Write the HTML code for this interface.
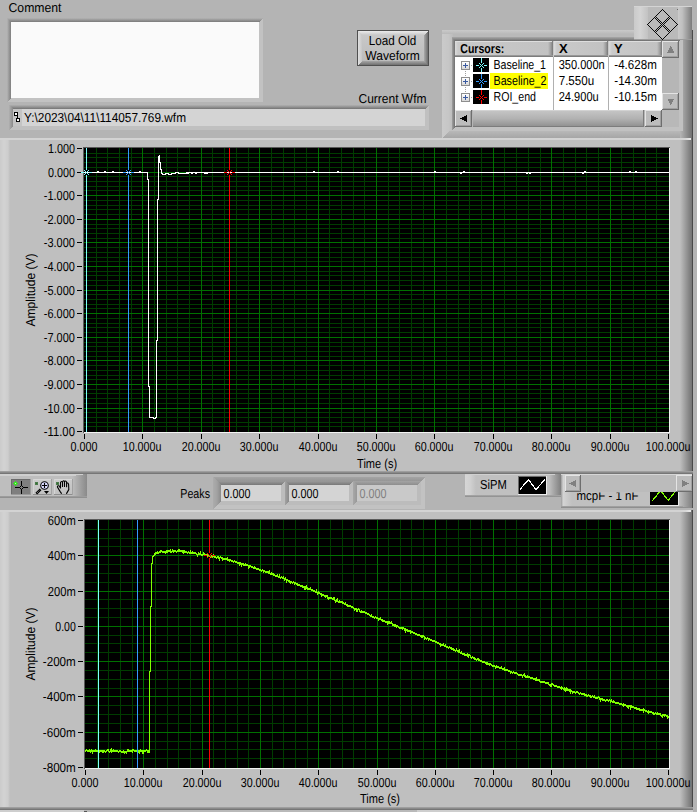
<!DOCTYPE html>
<html lang="en"><head><meta charset="utf-8"><title>Waveform viewer</title>
<style>
html,body{margin:0;padding:0;background:#b4b4b4;}
body{width:697px;height:812px;overflow:hidden;font-family:"Liberation Sans",sans-serif;}
svg{display:block;}
svg text{shape-rendering:auto;text-rendering:geometricPrecision;}
</style></head><body>
<svg width="697" height="812" viewBox="0 0 697 812" shape-rendering="crispEdges" font-family="'Liberation Sans', sans-serif" font-size="13"><defs><linearGradient id="g1" gradientUnits="userSpaceOnUse" x1="0" y1="18" x2="0" y2="22"><stop offset="0" stop-color="#b4b4b4"/><stop offset="1" stop-color="#7a7a7a"/></linearGradient><linearGradient id="g2" gradientUnits="userSpaceOnUse" x1="7" y1="0" x2="11" y2="0"><stop offset="0" stop-color="#b4b4b4"/><stop offset="1" stop-color="#7e7e7e"/></linearGradient><linearGradient id="g3" gradientUnits="userSpaceOnUse" x1="0" y1="105" x2="0" y2="109"><stop offset="0" stop-color="#b0b0b0"/><stop offset="1" stop-color="#747474"/></linearGradient><linearGradient id="g4" gradientUnits="userSpaceOnUse" x1="9" y1="0" x2="13" y2="0"><stop offset="0" stop-color="#b0b0b0"/><stop offset="1" stop-color="#8a8a8a"/></linearGradient><linearGradient id="g5" gradientUnits="userSpaceOnUse" x1="0" y1="31" x2="0" y2="35"><stop offset="0" stop-color="#ececec"/><stop offset="1" stop-color="#c8c8c8"/></linearGradient><linearGradient id="g6" gradientUnits="userSpaceOnUse" x1="0" y1="65" x2="0" y2="61"><stop offset="0" stop-color="#707070"/><stop offset="1" stop-color="#a6a6a6"/></linearGradient><linearGradient id="g7" gradientUnits="userSpaceOnUse" x1="358" y1="0" x2="362" y2="0"><stop offset="0" stop-color="#e0e0e0"/><stop offset="1" stop-color="#c6c6c6"/></linearGradient><linearGradient id="g8" gradientUnits="userSpaceOnUse" x1="428" y1="0" x2="424" y2="0"><stop offset="0" stop-color="#6c6c6c"/><stop offset="1" stop-color="#aaaaaa"/></linearGradient><linearGradient id="g9" gradientUnits="userSpaceOnUse" x1="0" y1="35" x2="0" y2="61"><stop offset="0" stop-color="#c8c8c8"/><stop offset="1" stop-color="#bcbcbc"/></linearGradient><linearGradient id="g10" gradientUnits="userSpaceOnUse" x1="442" y1="0" x2="453" y2="0"><stop offset="0" stop-color="#cacaca"/><stop offset="0.6" stop-color="#c6c6c6"/><stop offset="1" stop-color="#bcbcbc"/></linearGradient><linearGradient id="g11" gradientUnits="userSpaceOnUse" x1="0" y1="30" x2="0" y2="34"><stop offset="0" stop-color="#cacaca"/><stop offset="1" stop-color="#b9b9b9"/></linearGradient><linearGradient id="g12" gradientUnits="userSpaceOnUse" x1="0" y1="131" x2="0" y2="138"><stop offset="0" stop-color="#b8b8b8"/><stop offset="1" stop-color="#a6a6a6"/></linearGradient><linearGradient id="g13" gradientUnits="userSpaceOnUse" x1="680" y1="0" x2="693" y2="0"><stop offset="0" stop-color="#b6b6b6"/><stop offset="0.9" stop-color="#727272"/><stop offset="0.93" stop-color="#4a4a4a"/><stop offset="1" stop-color="#4a4a4a"/></linearGradient><linearGradient id="g14" gradientUnits="userSpaceOnUse" x1="0" y1="37" x2="0" y2="41"><stop offset="0" stop-color="#a8a8a8"/><stop offset="1" stop-color="#6e6e6e"/></linearGradient><linearGradient id="g15" gradientUnits="userSpaceOnUse" x1="452" y1="0" x2="455" y2="0"><stop offset="0" stop-color="#a0a0a0"/><stop offset="1" stop-color="#707070"/></linearGradient><linearGradient id="g16" gradientUnits="userSpaceOnUse" x1="455" y1="0" x2="553" y2="0"><stop offset="0" stop-color="#dcdcdc"/><stop offset="0.030612244897959183" stop-color="#cacaca"/><stop offset="0.9489795918367347" stop-color="#c2c2c2"/><stop offset="0.9795918367346939" stop-color="#9c9c9c"/><stop offset="1" stop-color="#767676"/></linearGradient><linearGradient id="g17" gradientUnits="userSpaceOnUse" x1="0" y1="55" x2="0" y2="57"><stop offset="0" stop-color="#a6a6a6"/><stop offset="1" stop-color="#6e6e6e"/></linearGradient><linearGradient id="g18" gradientUnits="userSpaceOnUse" x1="554" y1="0" x2="608" y2="0"><stop offset="0" stop-color="#dcdcdc"/><stop offset="0.05555555555555555" stop-color="#cacaca"/><stop offset="0.9074074074074074" stop-color="#c2c2c2"/><stop offset="0.962962962962963" stop-color="#9c9c9c"/><stop offset="1" stop-color="#767676"/></linearGradient><linearGradient id="g19" gradientUnits="userSpaceOnUse" x1="0" y1="55" x2="0" y2="57"><stop offset="0" stop-color="#a6a6a6"/><stop offset="1" stop-color="#6e6e6e"/></linearGradient><linearGradient id="g20" gradientUnits="userSpaceOnUse" x1="609" y1="0" x2="662" y2="0"><stop offset="0" stop-color="#dcdcdc"/><stop offset="0.05660377358490566" stop-color="#cacaca"/><stop offset="0.9056603773584906" stop-color="#c2c2c2"/><stop offset="0.9622641509433962" stop-color="#9c9c9c"/><stop offset="1" stop-color="#767676"/></linearGradient><linearGradient id="g21" gradientUnits="userSpaceOnUse" x1="0" y1="55" x2="0" y2="57"><stop offset="0" stop-color="#a6a6a6"/><stop offset="1" stop-color="#6e6e6e"/></linearGradient><linearGradient id="g22" gradientUnits="userSpaceOnUse" x1="0" y1="62" x2="0" y2="69"><stop offset="0" stop-color="#ffffff"/><stop offset="1" stop-color="#d8d8d8"/></linearGradient><linearGradient id="g23" gradientUnits="userSpaceOnUse" x1="0" y1="78" x2="0" y2="85"><stop offset="0" stop-color="#ffffff"/><stop offset="1" stop-color="#d8d8d8"/></linearGradient><linearGradient id="g24" gradientUnits="userSpaceOnUse" x1="0" y1="94" x2="0" y2="101"><stop offset="0" stop-color="#ffffff"/><stop offset="1" stop-color="#d8d8d8"/></linearGradient><linearGradient id="g25" gradientUnits="userSpaceOnUse" x1="0" y1="110" x2="0" y2="127"><stop offset="0" stop-color="#c6c6c6"/><stop offset="0.5" stop-color="#b2b2b2"/><stop offset="1" stop-color="#8e8e8e"/></linearGradient><linearGradient id="g26" gradientUnits="userSpaceOnUse" x1="634" y1="0" x2="648" y2="0"><stop offset="0" stop-color="#cacaca"/><stop offset="0.45" stop-color="#d4d4d4"/><stop offset="1" stop-color="#c2c2c2"/></linearGradient><linearGradient id="g27" gradientUnits="userSpaceOnUse" x1="678" y1="0" x2="692" y2="0"><stop offset="0" stop-color="#cacaca"/><stop offset="0.3" stop-color="#c0c0c0"/><stop offset="1" stop-color="#7c7c7c"/></linearGradient><linearGradient id="g28" gradientUnits="userSpaceOnUse" x1="0" y1="0" x2="10" y2="0"><stop offset="0" stop-color="#cbcbcb"/><stop offset="0.4" stop-color="#d3d3d3"/><stop offset="0.8" stop-color="#cdcdcd"/><stop offset="1" stop-color="#bfbfbf"/></linearGradient><linearGradient id="g29" gradientUnits="userSpaceOnUse" x1="680" y1="0" x2="693" y2="0"><stop offset="0" stop-color="#bfbfbf"/><stop offset="0.92" stop-color="#727272"/><stop offset="0.93" stop-color="#484848"/><stop offset="1" stop-color="#484848"/></linearGradient><linearGradient id="g30" gradientUnits="userSpaceOnUse" x1="680" y1="0" x2="691" y2="0"><stop offset="0" stop-color="#d3d3d3"/><stop offset="0.5" stop-color="#d6d6d6"/><stop offset="1" stop-color="#ececec"/></linearGradient><linearGradient id="g31" gradientUnits="userSpaceOnUse" x1="0" y1="471" x2="0" y2="474"><stop offset="0" stop-color="#a8a8a8"/><stop offset="1" stop-color="#6c6c6c"/></linearGradient><linearGradient id="g32" gradientUnits="userSpaceOnUse" x1="72" y1="0" x2="87" y2="0"><stop offset="0" stop-color="#bebebe"/><stop offset="1" stop-color="#8a8a8a"/></linearGradient><linearGradient id="g33" gradientUnits="userSpaceOnUse" x1="0" y1="496" x2="0" y2="498"><stop offset="0" stop-color="#a2a2a2"/><stop offset="1" stop-color="#8a8a8a"/></linearGradient><linearGradient id="g34" gradientUnits="userSpaceOnUse" x1="0" y1="479" x2="0" y2="495"><stop offset="0" stop-color="#cccccc"/><stop offset="1" stop-color="#c0c0c0"/></linearGradient><linearGradient id="g35" gradientUnits="userSpaceOnUse" x1="0" y1="479" x2="0" y2="495"><stop offset="0" stop-color="#cccccc"/><stop offset="1" stop-color="#c0c0c0"/></linearGradient><linearGradient id="g36" gradientUnits="userSpaceOnUse" x1="0" y1="477" x2="0" y2="481"><stop offset="0" stop-color="#a4a4a4"/><stop offset="1" stop-color="#969696"/></linearGradient><linearGradient id="g37" gradientUnits="userSpaceOnUse" x1="213" y1="0" x2="217" y2="0"><stop offset="0" stop-color="#acacac"/><stop offset="1" stop-color="#a2a2a2"/></linearGradient><linearGradient id="g38" gradientUnits="userSpaceOnUse" x1="0" y1="481" x2="0" y2="485"><stop offset="0" stop-color="#9a9a9a"/><stop offset="1" stop-color="#787878"/></linearGradient><linearGradient id="g39" gradientUnits="userSpaceOnUse" x1="217" y1="0" x2="221" y2="0"><stop offset="0" stop-color="#a2a2a2"/><stop offset="1" stop-color="#8a8a8a"/></linearGradient><linearGradient id="g40" gradientUnits="userSpaceOnUse" x1="0" y1="481" x2="0" y2="485"><stop offset="0" stop-color="#9a9a9a"/><stop offset="1" stop-color="#787878"/></linearGradient><linearGradient id="g41" gradientUnits="userSpaceOnUse" x1="285" y1="0" x2="289" y2="0"><stop offset="0" stop-color="#a2a2a2"/><stop offset="1" stop-color="#8a8a8a"/></linearGradient><linearGradient id="g42" gradientUnits="userSpaceOnUse" x1="0" y1="481" x2="0" y2="485"><stop offset="0" stop-color="#a4a4a4"/><stop offset="1" stop-color="#8e8e8e"/></linearGradient><linearGradient id="g43" gradientUnits="userSpaceOnUse" x1="353" y1="0" x2="357" y2="0"><stop offset="0" stop-color="#a8a8a8"/><stop offset="1" stop-color="#989898"/></linearGradient><linearGradient id="g44" gradientUnits="userSpaceOnUse" x1="465" y1="0" x2="476" y2="0"><stop offset="0" stop-color="#d6d6d6"/><stop offset="0.5" stop-color="#d0d0d0"/><stop offset="1" stop-color="#c0c0c0"/></linearGradient><linearGradient id="g45" gradientUnits="userSpaceOnUse" x1="549" y1="0" x2="561" y2="0"><stop offset="0" stop-color="#c0c0c0"/><stop offset="1" stop-color="#808080"/></linearGradient><linearGradient id="g46" gradientUnits="userSpaceOnUse" x1="0" y1="495" x2="0" y2="497"><stop offset="0" stop-color="#aaaaaa"/><stop offset="1" stop-color="#8c8c8c"/></linearGradient><linearGradient id="g47" gradientUnits="userSpaceOnUse" x1="561" y1="0" x2="572" y2="0"><stop offset="0" stop-color="#9a9a9a"/><stop offset="0.2" stop-color="#d4d4d4"/><stop offset="1" stop-color="#c0c0c0"/></linearGradient><linearGradient id="g48" gradientUnits="userSpaceOnUse" x1="0" y1="506" x2="0" y2="508"><stop offset="0" stop-color="#a8a8a8"/><stop offset="1" stop-color="#868686"/></linearGradient><linearGradient id="g49" gradientUnits="userSpaceOnUse" x1="679" y1="0" x2="693" y2="0"><stop offset="0" stop-color="#c0c0c0"/><stop offset="1" stop-color="#7c7c7c"/></linearGradient><linearGradient id="g50" gradientUnits="userSpaceOnUse" x1="0" y1="0" x2="10" y2="0"><stop offset="0" stop-color="#cbcbcb"/><stop offset="0.4" stop-color="#d3d3d3"/><stop offset="0.8" stop-color="#cdcdcd"/><stop offset="1" stop-color="#bfbfbf"/></linearGradient><linearGradient id="g51" gradientUnits="userSpaceOnUse" x1="680" y1="0" x2="693" y2="0"><stop offset="0" stop-color="#bfbfbf"/><stop offset="0.92" stop-color="#727272"/><stop offset="0.93" stop-color="#484848"/><stop offset="1" stop-color="#484848"/></linearGradient><linearGradient id="g52" gradientUnits="userSpaceOnUse" x1="680" y1="0" x2="691" y2="0"><stop offset="0" stop-color="#d3d3d3"/><stop offset="0.5" stop-color="#d6d6d6"/><stop offset="1" stop-color="#ececec"/></linearGradient><linearGradient id="g53" gradientUnits="userSpaceOnUse" x1="0" y1="807" x2="0" y2="810"><stop offset="0" stop-color="#a8a8a8"/><stop offset="1" stop-color="#6c6c6c"/></linearGradient></defs><rect x="0" y="0" width="697" height="812" fill="#b4b4b4" />
<text x="8.5" y="11.5" font-size="13" font-weight="normal" fill="#000" text-anchor="start" textLength="53" lengthAdjust="spacingAndGlyphs" >Comment</text>
<polygon points="7,18 263,18 259,22 11,22" fill="url(#g1)" />
<polygon points="7,102 263,102 259,98 11,98" fill="#c2c2c2" />
<polygon points="7,18 11,22 11,98 7,102" fill="url(#g2)" />
<polygon points="263,18 259,22 259,98 263,102" fill="#c2c2c2" />
<rect x="11" y="22" width="248" height="76" fill="#fafafa" />
<polygon points="9,105 429,105 425,109 13,109" fill="url(#g3)" />
<polygon points="9,130 429,130 425,126 13,126" fill="#c0c0c0" />
<polygon points="9,105 13,109 13,126 9,130" fill="url(#g4)" />
<polygon points="429,105 425,109 425,126 429,130" fill="#c0c0c0" />
<rect x="13" y="109" width="412" height="17" fill="#d4d4d4" />
<rect x="13" y="109" width="9" height="17" fill="#c4c4c4" />
<rect x="14" y="112" width="4" height="4" fill="#000" />
<rect x="15" y="113" width="2" height="2" fill="#fff" />
<rect x="17" y="116" width="1" height="2" fill="#000" />
<rect x="16" y="118" width="4" height="4" fill="#000" />
<rect x="17" y="119" width="2" height="2" fill="#fff" />
<text x="24" y="121.5" font-size="13" font-weight="normal" fill="#000" text-anchor="start" textLength="162" lengthAdjust="spacingAndGlyphs" >Y:\2023\04\11\114057.769.wfm</text>
<text x="358.5" y="102.5" font-size="13" font-weight="normal" fill="#000" text-anchor="start" textLength="68" lengthAdjust="spacingAndGlyphs" >Current Wfm</text>
<rect x="357" y="30" width="72" height="36" fill="#505050" />
<polygon points="358,31 428,31 424,35 362,35" fill="url(#g5)" />
<polygon points="358,65 428,65 424,61 362,61" fill="url(#g6)" />
<polygon points="358,31 362,35 362,61 358,65" fill="url(#g7)" />
<polygon points="428,31 424,35 424,61 428,65" fill="url(#g8)" />
<rect x="362" y="35" width="62" height="26" fill="url(#g9)" />
<text x="392.5" y="45" font-size="13" font-weight="normal" fill="#000" text-anchor="middle" textLength="47.5" lengthAdjust="spacingAndGlyphs" >Load Old</text>
<text x="392.5" y="60" font-size="13" font-weight="normal" fill="#000" text-anchor="middle" textLength="54.5" lengthAdjust="spacingAndGlyphs" >Waveform</text>
<rect x="442" y="30" width="251" height="108" fill="#b9b9b9" />
<rect x="442" y="30" width="11" height="108" fill="url(#g10)" />
<rect x="442" y="30" width="251" height="4" fill="url(#g11)" />
<polygon points="442,138 693,138 693,131 449,131" fill="url(#g12)" />
<rect x="680" y="30" width="13" height="108" fill="url(#g13)" />
<polygon points="452,37 683,37 679,41 455,41" fill="url(#g14)" />
<polygon points="452,131 683,131 679,127 455,127" fill="#c1c1c1" />
<polygon points="452,37 455,41 455,127 452,131" fill="url(#g15)" />
<polygon points="683,37 679,41 679,127 683,131" fill="#c1c1c1" />
<rect x="455" y="41" width="224" height="86" fill="#b8b8b8" />
<rect x="455" y="57" width="207" height="53" fill="#ffffff" />
<rect x="455" y="41" width="207" height="16" fill="#c8c8c8" />
<rect x="455" y="41" width="98" height="16" fill="url(#g16)" />
<rect x="455" y="41" width="97" height="1" fill="#dedede" />
<rect x="455" y="55" width="98" height="2" fill="url(#g17)" />
<rect x="554" y="41" width="54" height="16" fill="url(#g18)" />
<rect x="554" y="41" width="53" height="1" fill="#dedede" />
<rect x="554" y="55" width="54" height="2" fill="url(#g19)" />
<rect x="609" y="41" width="53" height="16" fill="url(#g20)" />
<rect x="609" y="41" width="52" height="1" fill="#dedede" />
<rect x="609" y="55" width="53" height="2" fill="url(#g21)" />
<rect x="553" y="57" width="1" height="53" fill="#b0b0b0" />
<rect x="608" y="57" width="1" height="53" fill="#b0b0b0" />
<text x="460.3" y="52.5" font-size="13" font-weight="bold" fill="#000" text-anchor="start" textLength="44" lengthAdjust="spacingAndGlyphs" >Cursors:</text>
<text x="559" y="52.5" font-size="13" font-weight="bold" fill="#000" text-anchor="start" >X</text>
<text x="614" y="52.5" font-size="13" font-weight="bold" fill="#000" text-anchor="start" >Y</text>
<rect x="461" y="61" width="9" height="9" fill="#8e8e8e" rx="1.5"/>
<rect x="462" y="62" width="7" height="7" fill="url(#g22)" />
<rect x="463" y="65" width="5" height="1" fill="#3a5aa0" />
<rect x="465" y="63" width="1" height="5" fill="#3a5aa0" />
<rect x="471" y="65" width="1" height="1" fill="#a0a0a0" />
<rect x="465" y="71" width="1" height="1" fill="#a0a0a0" />
<rect x="465" y="73" width="1" height="1" fill="#a0a0a0" />
<rect x="465" y="75" width="1" height="1" fill="#a0a0a0" />
<rect x="473" y="58" width="16" height="14" fill="#000000" />
<rect x="481" y="58" width="1" height="5" fill="#80ffff" />
<rect x="481" y="68" width="1" height="4" fill="#80ffff" />
<rect x="476" y="65" width="3" height="1" fill="#80ffff" />
<rect x="484" y="65" width="3" height="1" fill="#80ffff" />
<rect x="480" y="64" width="1" height="1" fill="#80ffff" />
<rect x="482" y="64" width="1" height="1" fill="#80ffff" />
<rect x="480" y="66" width="1" height="1" fill="#80ffff" />
<rect x="482" y="66" width="1" height="1" fill="#80ffff" />
<rect x="479" y="63" width="1" height="1" fill="#80ffff" />
<rect x="483" y="63" width="1" height="1" fill="#80ffff" />
<rect x="479" y="67" width="1" height="1" fill="#80ffff" />
<rect x="483" y="67" width="1" height="1" fill="#80ffff" />
<rect x="481" y="65" width="1" height="1" fill="#80ffff" />
<text x="493.5" y="68.7" font-size="13" font-weight="normal" fill="#000" text-anchor="start" textLength="52.5" lengthAdjust="spacingAndGlyphs" >Baseline_1</text>
<text x="558.7" y="68.7" font-size="13" font-weight="normal" fill="#000" text-anchor="start" textLength="46" lengthAdjust="spacingAndGlyphs" >350.000n</text>
<text x="614.3" y="68.7" font-size="13" font-weight="normal" fill="#000" text-anchor="start" textLength="42.5" lengthAdjust="spacingAndGlyphs" >-4.628m</text>
<rect x="490" y="73" width="58" height="16" fill="#ffff00" />
<rect x="461" y="77" width="9" height="9" fill="#8e8e8e" rx="1.5"/>
<rect x="462" y="78" width="7" height="7" fill="url(#g23)" />
<rect x="463" y="81" width="5" height="1" fill="#3a5aa0" />
<rect x="465" y="79" width="1" height="5" fill="#3a5aa0" />
<rect x="471" y="81" width="1" height="1" fill="#a0a0a0" />
<rect x="465" y="87" width="1" height="1" fill="#a0a0a0" />
<rect x="465" y="89" width="1" height="1" fill="#a0a0a0" />
<rect x="465" y="91" width="1" height="1" fill="#a0a0a0" />
<rect x="473" y="74" width="16" height="14" fill="#000000" />
<rect x="481" y="74" width="1" height="5" fill="#3399ff" />
<rect x="481" y="84" width="1" height="4" fill="#3399ff" />
<rect x="476" y="81" width="3" height="1" fill="#3399ff" />
<rect x="484" y="81" width="3" height="1" fill="#3399ff" />
<rect x="480" y="80" width="1" height="1" fill="#3399ff" />
<rect x="482" y="80" width="1" height="1" fill="#3399ff" />
<rect x="480" y="82" width="1" height="1" fill="#3399ff" />
<rect x="482" y="82" width="1" height="1" fill="#3399ff" />
<rect x="479" y="79" width="1" height="1" fill="#3399ff" />
<rect x="483" y="79" width="1" height="1" fill="#3399ff" />
<rect x="479" y="83" width="1" height="1" fill="#3399ff" />
<rect x="483" y="83" width="1" height="1" fill="#3399ff" />
<rect x="481" y="81" width="1" height="1" fill="#3399ff" />
<text x="493.5" y="84.7" font-size="13" font-weight="normal" fill="#000" text-anchor="start" textLength="53" lengthAdjust="spacingAndGlyphs" >Baseline_2</text>
<text x="558.7" y="84.7" font-size="13" font-weight="normal" fill="#000" text-anchor="start" textLength="35.5" lengthAdjust="spacingAndGlyphs" >7.550u</text>
<text x="614.3" y="84.7" font-size="13" font-weight="normal" fill="#000" text-anchor="start" textLength="42.5" lengthAdjust="spacingAndGlyphs" >-14.30m</text>
<rect x="461" y="93" width="9" height="9" fill="#8e8e8e" rx="1.5"/>
<rect x="462" y="94" width="7" height="7" fill="url(#g24)" />
<rect x="463" y="97" width="5" height="1" fill="#3a5aa0" />
<rect x="465" y="95" width="1" height="5" fill="#3a5aa0" />
<rect x="471" y="97" width="1" height="1" fill="#a0a0a0" />
<rect x="473" y="90" width="16" height="14" fill="#000000" />
<rect x="481" y="90" width="1" height="5" fill="#ff0000" />
<rect x="481" y="100" width="1" height="4" fill="#ff0000" />
<rect x="476" y="97" width="3" height="1" fill="#ff0000" />
<rect x="484" y="97" width="3" height="1" fill="#ff0000" />
<rect x="480" y="96" width="1" height="1" fill="#ff0000" />
<rect x="482" y="96" width="1" height="1" fill="#ff0000" />
<rect x="480" y="98" width="1" height="1" fill="#ff0000" />
<rect x="482" y="98" width="1" height="1" fill="#ff0000" />
<rect x="479" y="95" width="1" height="1" fill="#ff0000" />
<rect x="483" y="95" width="1" height="1" fill="#ff0000" />
<rect x="479" y="99" width="1" height="1" fill="#ff0000" />
<rect x="483" y="99" width="1" height="1" fill="#ff0000" />
<rect x="481" y="97" width="1" height="1" fill="#ff0000" />
<text x="493.5" y="100.7" font-size="13" font-weight="normal" fill="#000" text-anchor="start" textLength="42.5" lengthAdjust="spacingAndGlyphs" >ROI_end</text>
<text x="558.7" y="100.7" font-size="13" font-weight="normal" fill="#000" text-anchor="start" textLength="40" lengthAdjust="spacingAndGlyphs" >24.900u</text>
<text x="614.3" y="100.7" font-size="13" font-weight="normal" fill="#000" text-anchor="start" textLength="42.5" lengthAdjust="spacingAndGlyphs" >-10.15m</text>
<rect x="662" y="41" width="17" height="69" fill="#b6b6b6" />
<rect x="662" y="41" width="17" height="17" fill="#bcbcbc" />
<rect x="662" y="41" width="17" height="1" fill="#e4e4e4" />
<rect x="662" y="41" width="1" height="17" fill="#e4e4e4" />
<rect x="662" y="57" width="17" height="1" fill="#6e6e6e" />
<rect x="678" y="41" width="1" height="17" fill="#6e6e6e" />
<rect x="663" y="56" width="15" height="1" fill="#a0a0a0" />
<rect x="677" y="42" width="1" height="15" fill="#a0a0a0" />
<polygon points="670.5,45.5 674.0,52.5 667.0,52.5" fill="#808080" />
<rect x="662" y="93" width="17" height="17" fill="#bcbcbc" />
<rect x="662" y="93" width="17" height="1" fill="#e4e4e4" />
<rect x="662" y="93" width="1" height="17" fill="#e4e4e4" />
<rect x="662" y="109" width="17" height="1" fill="#6e6e6e" />
<rect x="678" y="93" width="1" height="17" fill="#6e6e6e" />
<rect x="663" y="108" width="15" height="1" fill="#a0a0a0" />
<rect x="677" y="94" width="1" height="15" fill="#a0a0a0" />
<polygon points="670.5,105.5 674.0,98.5 667.0,98.5" fill="#808080" />
<rect x="455" y="110" width="207" height="17" fill="#b6b6b6" />
<rect x="455" y="110" width="17" height="17" fill="#bcbcbc" />
<rect x="455" y="110" width="17" height="1" fill="#e4e4e4" />
<rect x="455" y="110" width="1" height="17" fill="#e4e4e4" />
<rect x="455" y="126" width="17" height="1" fill="#6e6e6e" />
<rect x="471" y="110" width="1" height="17" fill="#6e6e6e" />
<rect x="456" y="125" width="15" height="1" fill="#a0a0a0" />
<rect x="470" y="111" width="1" height="15" fill="#a0a0a0" />
<polygon points="459.5,118.5 466.5,115.0 466.5,122.0" fill="#000" />
<rect x="645" y="110" width="17" height="17" fill="#bcbcbc" />
<rect x="645" y="110" width="17" height="1" fill="#e4e4e4" />
<rect x="645" y="110" width="1" height="17" fill="#e4e4e4" />
<rect x="645" y="126" width="17" height="1" fill="#6e6e6e" />
<rect x="661" y="110" width="1" height="17" fill="#6e6e6e" />
<rect x="646" y="125" width="15" height="1" fill="#a0a0a0" />
<rect x="660" y="111" width="1" height="15" fill="#a0a0a0" />
<polygon points="657.5,118.5 650.5,115.0 650.5,122.0" fill="#000" />
<rect x="473" y="110" width="171" height="17" fill="url(#g25)" />
<rect x="473" y="110" width="171" height="1" fill="#d2d2d2" />
<rect x="643" y="110" width="1" height="17" fill="#7c7c7c" />
<rect x="473" y="126" width="171" height="1" fill="#7c7c7c" />
<rect x="634" y="6" width="58" height="34" fill="#bababa" />
<rect x="634" y="6" width="14" height="34" fill="url(#g26)" />
<rect x="678" y="6" width="14" height="34" fill="url(#g27)" />
<rect x="634" y="6" width="58" height="1" fill="#d4d4d4" />
<rect x="634" y="39" width="58" height="1" fill="#9c9c9c" />
<path d="M647,24h1v1h-1zM648,23h1v1h-1zM648,25h1v1h-1zM649,22h1v1h-1zM649,26h1v1h-1zM650,21h1v1h-1zM650,27h1v1h-1zM651,20h1v1h-1zM651,28h1v1h-1zM652,19h1v1h-1zM652,29h1v1h-1zM653,18h1v1h-1zM653,30h1v1h-1zM654,17h1v1h-1zM654,31h1v1h-1zM655,16h1v1h-1zM655,18h1v1h-1zM655,30h1v1h-1zM655,32h1v1h-1zM656,15h1v1h-1zM656,17h1v1h-1zM656,19h1v1h-1zM656,29h1v1h-1zM656,31h1v1h-1zM656,33h1v1h-1zM657,14h1v1h-1zM657,18h1v1h-1zM657,20h1v1h-1zM657,28h1v1h-1zM657,30h1v1h-1zM657,34h1v1h-1zM658,13h1v1h-1zM658,19h1v1h-1zM658,21h1v1h-1zM658,27h1v1h-1zM658,29h1v1h-1zM658,35h1v1h-1zM659,12h1v1h-1zM659,20h1v1h-1zM659,22h1v1h-1zM659,26h1v1h-1zM659,28h1v1h-1zM659,36h1v1h-1zM660,11h1v1h-1zM660,21h1v1h-1zM660,23h1v1h-1zM660,25h1v1h-1zM660,27h1v1h-1zM660,37h1v1h-1zM661,10h1v1h-1zM661,22h1v1h-1zM661,24h1v1h-1zM661,26h1v1h-1zM661,38h1v1h-1zM662,9h1v1h-1zM662,23h1v1h-1zM662,25h1v1h-1zM662,39h1v1h-1zM663,10h1v1h-1zM663,22h1v1h-1zM663,24h1v1h-1zM663,26h1v1h-1zM663,38h1v1h-1zM664,11h1v1h-1zM664,21h1v1h-1zM664,23h1v1h-1zM664,25h1v1h-1zM664,27h1v1h-1zM664,37h1v1h-1zM665,12h1v1h-1zM665,20h1v1h-1zM665,22h1v1h-1zM665,26h1v1h-1zM665,28h1v1h-1zM665,36h1v1h-1zM666,13h1v1h-1zM666,19h1v1h-1zM666,21h1v1h-1zM666,27h1v1h-1zM666,29h1v1h-1zM666,35h1v1h-1zM667,14h1v1h-1zM667,18h1v1h-1zM667,20h1v1h-1zM667,28h1v1h-1zM667,30h1v1h-1zM667,34h1v1h-1zM668,15h1v1h-1zM668,17h1v1h-1zM668,19h1v1h-1zM668,29h1v1h-1zM668,31h1v1h-1zM668,33h1v1h-1zM669,16h1v1h-1zM669,18h1v1h-1zM669,30h1v1h-1zM669,32h1v1h-1zM670,17h1v1h-1zM670,31h1v1h-1zM671,18h1v1h-1zM671,30h1v1h-1zM672,19h1v1h-1zM672,29h1v1h-1zM673,20h1v1h-1zM673,28h1v1h-1zM674,21h1v1h-1zM674,27h1v1h-1zM675,22h1v1h-1zM675,26h1v1h-1zM676,23h1v1h-1zM676,25h1v1h-1zM677,24h1v1h-1z" fill="#0a0a0a"/>
<rect x="677" y="9" width="1" height="1" fill="#6a6a6a" />
<rect x="0" y="138" width="693" height="336" fill="#bfbfbf" />
<rect x="0" y="138" width="10" height="336" fill="url(#g28)" />
<rect x="0" y="138" width="693" height="2" fill="#d3d3d3" />
<polygon points="680,140 693,138 693,474 680,474" fill="url(#g29)" />
<rect x="680" y="138" width="11" height="2" fill="url(#g30)" />
<rect x="0" y="471" width="693" height="3" fill="url(#g31)" />
<rect x="83" y="147" width="587" height="286" fill="#5a5a5a" />
<rect x="84" y="432" width="586" height="1" fill="#f2f2f2" />
<rect x="669" y="148" width="1" height="285" fill="#f2f2f2" />
<rect x="84" y="148" width="585" height="284" fill="#000" />
<rect x="96" y="148" width="1" height="284" fill="#003c00" />
<rect x="107" y="148" width="1" height="284" fill="#003c00" />
<rect x="119" y="148" width="1" height="284" fill="#003c00" />
<rect x="131" y="148" width="1" height="284" fill="#003c00" />
<rect x="154" y="148" width="1" height="284" fill="#003c00" />
<rect x="166" y="148" width="1" height="284" fill="#003c00" />
<rect x="177" y="148" width="1" height="284" fill="#003c00" />
<rect x="189" y="148" width="1" height="284" fill="#003c00" />
<rect x="212" y="148" width="1" height="284" fill="#003c00" />
<rect x="224" y="148" width="1" height="284" fill="#003c00" />
<rect x="236" y="148" width="1" height="284" fill="#003c00" />
<rect x="248" y="148" width="1" height="284" fill="#003c00" />
<rect x="271" y="148" width="1" height="284" fill="#003c00" />
<rect x="283" y="148" width="1" height="284" fill="#003c00" />
<rect x="294" y="148" width="1" height="284" fill="#003c00" />
<rect x="306" y="148" width="1" height="284" fill="#003c00" />
<rect x="329" y="148" width="1" height="284" fill="#003c00" />
<rect x="341" y="148" width="1" height="284" fill="#003c00" />
<rect x="353" y="148" width="1" height="284" fill="#003c00" />
<rect x="364" y="148" width="1" height="284" fill="#003c00" />
<rect x="388" y="148" width="1" height="284" fill="#003c00" />
<rect x="399" y="148" width="1" height="284" fill="#003c00" />
<rect x="411" y="148" width="1" height="284" fill="#003c00" />
<rect x="423" y="148" width="1" height="284" fill="#003c00" />
<rect x="446" y="148" width="1" height="284" fill="#003c00" />
<rect x="458" y="148" width="1" height="284" fill="#003c00" />
<rect x="469" y="148" width="1" height="284" fill="#003c00" />
<rect x="481" y="148" width="1" height="284" fill="#003c00" />
<rect x="504" y="148" width="1" height="284" fill="#003c00" />
<rect x="516" y="148" width="1" height="284" fill="#003c00" />
<rect x="528" y="148" width="1" height="284" fill="#003c00" />
<rect x="540" y="148" width="1" height="284" fill="#003c00" />
<rect x="563" y="148" width="1" height="284" fill="#003c00" />
<rect x="575" y="148" width="1" height="284" fill="#003c00" />
<rect x="586" y="148" width="1" height="284" fill="#003c00" />
<rect x="598" y="148" width="1" height="284" fill="#003c00" />
<rect x="621" y="148" width="1" height="284" fill="#003c00" />
<rect x="633" y="148" width="1" height="284" fill="#003c00" />
<rect x="645" y="148" width="1" height="284" fill="#003c00" />
<rect x="656" y="148" width="1" height="284" fill="#003c00" />
<rect x="84" y="153" width="585" height="1" fill="#003c00" />
<rect x="84" y="157" width="585" height="1" fill="#003c00" />
<rect x="84" y="162" width="585" height="1" fill="#003c00" />
<rect x="84" y="167" width="585" height="1" fill="#003c00" />
<rect x="84" y="176" width="585" height="1" fill="#003c00" />
<rect x="84" y="181" width="585" height="1" fill="#003c00" />
<rect x="84" y="186" width="585" height="1" fill="#003c00" />
<rect x="84" y="190" width="585" height="1" fill="#003c00" />
<rect x="84" y="200" width="585" height="1" fill="#003c00" />
<rect x="84" y="205" width="585" height="1" fill="#003c00" />
<rect x="84" y="209" width="585" height="1" fill="#003c00" />
<rect x="84" y="214" width="585" height="1" fill="#003c00" />
<rect x="84" y="224" width="585" height="1" fill="#003c00" />
<rect x="84" y="228" width="585" height="1" fill="#003c00" />
<rect x="84" y="233" width="585" height="1" fill="#003c00" />
<rect x="84" y="238" width="585" height="1" fill="#003c00" />
<rect x="84" y="247" width="585" height="1" fill="#003c00" />
<rect x="84" y="252" width="585" height="1" fill="#003c00" />
<rect x="84" y="257" width="585" height="1" fill="#003c00" />
<rect x="84" y="261" width="585" height="1" fill="#003c00" />
<rect x="84" y="271" width="585" height="1" fill="#003c00" />
<rect x="84" y="275" width="585" height="1" fill="#003c00" />
<rect x="84" y="280" width="585" height="1" fill="#003c00" />
<rect x="84" y="285" width="585" height="1" fill="#003c00" />
<rect x="84" y="294" width="585" height="1" fill="#003c00" />
<rect x="84" y="299" width="585" height="1" fill="#003c00" />
<rect x="84" y="304" width="585" height="1" fill="#003c00" />
<rect x="84" y="308" width="585" height="1" fill="#003c00" />
<rect x="84" y="318" width="585" height="1" fill="#003c00" />
<rect x="84" y="323" width="585" height="1" fill="#003c00" />
<rect x="84" y="327" width="585" height="1" fill="#003c00" />
<rect x="84" y="332" width="585" height="1" fill="#003c00" />
<rect x="84" y="342" width="585" height="1" fill="#003c00" />
<rect x="84" y="346" width="585" height="1" fill="#003c00" />
<rect x="84" y="351" width="585" height="1" fill="#003c00" />
<rect x="84" y="356" width="585" height="1" fill="#003c00" />
<rect x="84" y="365" width="585" height="1" fill="#003c00" />
<rect x="84" y="370" width="585" height="1" fill="#003c00" />
<rect x="84" y="375" width="585" height="1" fill="#003c00" />
<rect x="84" y="379" width="585" height="1" fill="#003c00" />
<rect x="84" y="389" width="585" height="1" fill="#003c00" />
<rect x="84" y="393" width="585" height="1" fill="#003c00" />
<rect x="84" y="398" width="585" height="1" fill="#003c00" />
<rect x="84" y="403" width="585" height="1" fill="#003c00" />
<rect x="84" y="412" width="585" height="1" fill="#003c00" />
<rect x="84" y="417" width="585" height="1" fill="#003c00" />
<rect x="84" y="422" width="585" height="1" fill="#003c00" />
<rect x="84" y="426" width="585" height="1" fill="#003c00" />
<rect x="142" y="148" width="1" height="284" fill="#007000" />
<rect x="201" y="148" width="1" height="284" fill="#007000" />
<rect x="259" y="148" width="1" height="284" fill="#007000" />
<rect x="318" y="148" width="1" height="284" fill="#007000" />
<rect x="376" y="148" width="1" height="284" fill="#007000" />
<rect x="434" y="148" width="1" height="284" fill="#007000" />
<rect x="493" y="148" width="1" height="284" fill="#007000" />
<rect x="551" y="148" width="1" height="284" fill="#007000" />
<rect x="610" y="148" width="1" height="284" fill="#007000" />
<rect x="84" y="172" width="585" height="1" fill="#007000" />
<rect x="84" y="195" width="585" height="1" fill="#007000" />
<rect x="84" y="219" width="585" height="1" fill="#007000" />
<rect x="84" y="242" width="585" height="1" fill="#007000" />
<rect x="84" y="266" width="585" height="1" fill="#007000" />
<rect x="84" y="290" width="585" height="1" fill="#007000" />
<rect x="84" y="313" width="585" height="1" fill="#007000" />
<rect x="84" y="337" width="585" height="1" fill="#007000" />
<rect x="84" y="360" width="585" height="1" fill="#007000" />
<rect x="84" y="384" width="585" height="1" fill="#007000" />
<rect x="84" y="408" width="585" height="1" fill="#007000" />
<rect x="77" y="148" width="5" height="1" fill="#000" />
<text x="74.9" y="152.5" font-size="13" font-weight="normal" fill="#000" text-anchor="end" textLength="27" lengthAdjust="spacingAndGlyphs" >1.000</text>
<rect x="77" y="172" width="5" height="1" fill="#000" />
<text x="74.9" y="176.5" font-size="13" font-weight="normal" fill="#000" text-anchor="end" textLength="27" lengthAdjust="spacingAndGlyphs" >0.000</text>
<rect x="77" y="195" width="5" height="1" fill="#000" />
<text x="74.9" y="199.5" font-size="13" font-weight="normal" fill="#000" text-anchor="end" textLength="31.1" lengthAdjust="spacingAndGlyphs" >-1.000</text>
<rect x="77" y="219" width="5" height="1" fill="#000" />
<text x="74.9" y="223.5" font-size="13" font-weight="normal" fill="#000" text-anchor="end" textLength="31.1" lengthAdjust="spacingAndGlyphs" >-2.000</text>
<rect x="77" y="242" width="5" height="1" fill="#000" />
<text x="74.9" y="246.5" font-size="13" font-weight="normal" fill="#000" text-anchor="end" textLength="31.1" lengthAdjust="spacingAndGlyphs" >-3.000</text>
<rect x="77" y="266" width="5" height="1" fill="#000" />
<text x="74.9" y="270.5" font-size="13" font-weight="normal" fill="#000" text-anchor="end" textLength="31.1" lengthAdjust="spacingAndGlyphs" >-4.000</text>
<rect x="77" y="290" width="5" height="1" fill="#000" />
<text x="74.9" y="294.5" font-size="13" font-weight="normal" fill="#000" text-anchor="end" textLength="31.1" lengthAdjust="spacingAndGlyphs" >-5.000</text>
<rect x="77" y="313" width="5" height="1" fill="#000" />
<text x="74.9" y="317.5" font-size="13" font-weight="normal" fill="#000" text-anchor="end" textLength="31.1" lengthAdjust="spacingAndGlyphs" >-6.000</text>
<rect x="77" y="337" width="5" height="1" fill="#000" />
<text x="74.9" y="341.5" font-size="13" font-weight="normal" fill="#000" text-anchor="end" textLength="31.1" lengthAdjust="spacingAndGlyphs" >-7.000</text>
<rect x="77" y="360" width="5" height="1" fill="#000" />
<text x="74.9" y="364.5" font-size="13" font-weight="normal" fill="#000" text-anchor="end" textLength="31.1" lengthAdjust="spacingAndGlyphs" >-8.000</text>
<rect x="77" y="384" width="5" height="1" fill="#000" />
<text x="74.9" y="388.5" font-size="13" font-weight="normal" fill="#000" text-anchor="end" textLength="31.1" lengthAdjust="spacingAndGlyphs" >-9.000</text>
<rect x="77" y="408" width="5" height="1" fill="#000" />
<text x="74.9" y="412.5" font-size="13" font-weight="normal" fill="#000" text-anchor="end" textLength="31.1" lengthAdjust="spacingAndGlyphs" >-10.00</text>
<rect x="77" y="431" width="5" height="1" fill="#000" />
<text x="74.9" y="435.5" font-size="13" font-weight="normal" fill="#000" text-anchor="end" textLength="31.1" lengthAdjust="spacingAndGlyphs" >-11.00</text>
<rect x="84" y="434" width="1" height="5" fill="#000" />
<text x="84.1" y="450.7" font-size="13" font-weight="normal" fill="#000" text-anchor="middle" textLength="27" lengthAdjust="spacingAndGlyphs" >0.000</text>
<rect x="142" y="434" width="1" height="5" fill="#000" />
<text x="142.1" y="450.7" font-size="13" font-weight="normal" fill="#000" text-anchor="middle" textLength="38.8" lengthAdjust="spacingAndGlyphs" >10.000u</text>
<rect x="201" y="434" width="1" height="5" fill="#000" />
<text x="201.1" y="450.7" font-size="13" font-weight="normal" fill="#000" text-anchor="middle" textLength="38.8" lengthAdjust="spacingAndGlyphs" >20.000u</text>
<rect x="259" y="434" width="1" height="5" fill="#000" />
<text x="259.1" y="450.7" font-size="13" font-weight="normal" fill="#000" text-anchor="middle" textLength="38.8" lengthAdjust="spacingAndGlyphs" >30.000u</text>
<rect x="318" y="434" width="1" height="5" fill="#000" />
<text x="318.1" y="450.7" font-size="13" font-weight="normal" fill="#000" text-anchor="middle" textLength="38.8" lengthAdjust="spacingAndGlyphs" >40.000u</text>
<rect x="376" y="434" width="1" height="5" fill="#000" />
<text x="376.1" y="450.7" font-size="13" font-weight="normal" fill="#000" text-anchor="middle" textLength="38.8" lengthAdjust="spacingAndGlyphs" >50.000u</text>
<rect x="434" y="434" width="1" height="5" fill="#000" />
<text x="434.1" y="450.7" font-size="13" font-weight="normal" fill="#000" text-anchor="middle" textLength="38.8" lengthAdjust="spacingAndGlyphs" >60.000u</text>
<rect x="493" y="434" width="1" height="5" fill="#000" />
<text x="493.1" y="450.7" font-size="13" font-weight="normal" fill="#000" text-anchor="middle" textLength="38.8" lengthAdjust="spacingAndGlyphs" >70.000u</text>
<rect x="551" y="434" width="1" height="5" fill="#000" />
<text x="551.1" y="450.7" font-size="13" font-weight="normal" fill="#000" text-anchor="middle" textLength="38.8" lengthAdjust="spacingAndGlyphs" >80.000u</text>
<rect x="610" y="434" width="1" height="5" fill="#000" />
<text x="610.1" y="450.7" font-size="13" font-weight="normal" fill="#000" text-anchor="middle" textLength="38.8" lengthAdjust="spacingAndGlyphs" >90.000u</text>
<rect x="668" y="434" width="1" height="5" fill="#000" />
<text x="668.1" y="450.7" font-size="13" font-weight="normal" fill="#000" text-anchor="middle" textLength="44.6" lengthAdjust="spacingAndGlyphs" >100.000u</text>
<text x="377.1" y="467.7" font-size="13" font-weight="normal" fill="#000" text-anchor="middle" textLength="40" lengthAdjust="spacingAndGlyphs" >Time (s)</text>
<text transform="translate(35.3,290) rotate(-90)" font-size="13" text-anchor="middle" textLength="73" lengthAdjust="spacingAndGlyphs">Amplitude (V)</text>
<path d="M84,172h1v1h-1zM85,172h1v1h-1zM86,172h1v1h-1zM87,172h1v1h-1zM88,172h1v1h-1zM89,172h1v1h-1zM90,172h1v1h-1zM91,172h1v1h-1zM92,172h1v1h-1zM93,172h1v1h-1zM94,172h1v1h-1zM95,172h1v1h-1zM96,172h1v1h-1zM97,171h1v2h-1zM98,171h1v2h-1zM99,172h1v1h-1zM100,172h1v1h-1zM101,172h1v1h-1zM102,172h1v1h-1zM103,172h1v1h-1zM104,171h1v2h-1zM105,171h1v2h-1zM106,172h1v1h-1zM107,172h1v1h-1zM108,172h1v1h-1zM109,172h1v1h-1zM110,172h1v1h-1zM111,172h1v1h-1zM112,171h1v2h-1zM113,171h1v2h-1zM114,172h1v1h-1zM115,172h1v1h-1zM116,172h1v1h-1zM117,172h1v1h-1zM118,172h1v1h-1zM119,172h1v1h-1zM120,172h1v1h-1zM121,172h1v1h-1zM122,172h1v1h-1zM123,172h1v1h-1zM124,172h1v1h-1zM125,172h1v1h-1zM126,172h1v1h-1zM127,172h1v1h-1zM128,172h1v1h-1zM129,172h1v1h-1zM130,172h1v1h-1zM131,172h1v1h-1zM132,172h1v1h-1zM133,172h1v1h-1zM134,172h1v1h-1zM135,172h1v1h-1zM136,172h1v1h-1zM137,172h1v1h-1zM138,172h1v1h-1zM139,171h1v2h-1zM140,171h1v2h-1zM141,172h1v1h-1zM142,172h1v1h-1zM143,172h1v1h-1zM144,172h1v1h-1zM145,172h1v1h-1zM146,172h1v1h-1zM147,172h1v1h-1zM147,172h1v8h-1zM148,179h1v2h-1zM148,180h1v207h-1zM149,386h1v1h-1zM149,386h1v32h-1zM150,417h1v1h-1zM151,417h1v1h-1zM152,417h1v1h-1zM153,417h1v2h-1zM154,418h1v1h-1zM155,417h1v2h-1zM156,417h1v1h-1zM156,340h1v78h-1zM157,340h1v1h-1zM157,199h1v142h-1zM158,199h1v1h-1zM158,156h1v44h-1zM159,155h1v2h-1zM159,155h1v8h-1zM160,162h1v1h-1zM160,162h1v8h-1zM161,169h1v2h-1zM161,170h1v4h-1zM162,173h1v2h-1zM163,174h1v1h-1zM164,174h1v1h-1zM165,173h1v2h-1zM166,173h1v1h-1zM167,173h1v1h-1zM168,173h1v2h-1zM169,174h1v1h-1zM170,174h1v1h-1zM171,173h1v2h-1zM172,173h1v1h-1zM173,173h1v1h-1zM174,173h1v1h-1zM175,172h1v2h-1zM176,172h1v1h-1zM177,172h1v1h-1zM178,172h1v2h-1zM179,173h1v1h-1zM180,173h1v1h-1zM181,173h1v1h-1zM182,173h1v1h-1zM183,173h1v1h-1zM184,173h1v1h-1zM185,173h1v1h-1zM186,172h1v2h-1zM187,172h1v2h-1zM188,172h1v2h-1zM189,172h1v1h-1zM190,172h1v1h-1zM191,172h1v2h-1zM192,172h1v2h-1zM193,172h1v1h-1zM194,172h1v1h-1zM195,172h1v2h-1zM196,172h1v2h-1zM197,172h1v1h-1zM198,172h1v1h-1zM199,172h1v1h-1zM200,172h1v1h-1zM201,172h1v1h-1zM202,172h1v1h-1zM203,172h1v1h-1zM204,172h1v2h-1zM205,172h1v2h-1zM206,172h1v2h-1zM207,172h1v2h-1zM208,172h1v1h-1zM209,172h1v1h-1zM210,172h1v1h-1zM211,172h1v1h-1zM212,172h1v1h-1zM213,172h1v1h-1zM214,172h1v1h-1zM215,172h1v1h-1zM216,172h1v1h-1zM217,172h1v1h-1zM218,172h1v1h-1zM219,172h1v1h-1zM220,172h1v1h-1zM221,172h1v1h-1zM222,172h1v1h-1zM223,172h1v1h-1zM224,172h1v1h-1zM225,172h1v1h-1zM226,172h1v1h-1zM227,172h1v1h-1zM228,172h1v1h-1zM229,172h1v1h-1zM230,172h1v1h-1zM231,172h1v1h-1zM232,172h1v1h-1zM233,172h1v1h-1zM234,172h1v1h-1zM235,172h1v1h-1zM236,172h1v1h-1zM237,172h1v1h-1zM238,172h1v1h-1zM239,172h1v1h-1zM240,172h1v1h-1zM241,172h1v1h-1zM242,172h1v1h-1zM243,172h1v1h-1zM244,172h1v1h-1zM245,172h1v1h-1zM246,172h1v1h-1zM247,172h1v1h-1zM248,172h1v1h-1zM249,172h1v1h-1zM250,172h1v1h-1zM251,172h1v1h-1zM252,172h1v1h-1zM253,172h1v1h-1zM254,172h1v1h-1zM255,172h1v1h-1zM256,172h1v1h-1zM257,172h1v1h-1zM258,172h1v1h-1zM259,172h1v1h-1zM260,172h1v1h-1zM261,172h1v1h-1zM262,172h1v1h-1zM263,172h1v1h-1zM264,172h1v1h-1zM265,172h1v1h-1zM266,172h1v1h-1zM267,172h1v1h-1zM268,172h1v1h-1zM269,172h1v1h-1zM270,172h1v1h-1zM271,172h1v1h-1zM272,172h1v1h-1zM273,172h1v1h-1zM274,172h1v1h-1zM275,172h1v1h-1zM276,172h1v1h-1zM277,172h1v1h-1zM278,172h1v1h-1zM279,172h1v1h-1zM280,172h1v1h-1zM281,172h1v1h-1zM282,172h1v1h-1zM283,172h1v1h-1zM284,172h1v1h-1zM285,172h1v1h-1zM286,172h1v1h-1zM287,172h1v1h-1zM288,172h1v1h-1zM289,172h1v1h-1zM290,172h1v1h-1zM291,172h1v1h-1zM292,172h1v1h-1zM293,172h1v1h-1zM294,172h1v1h-1zM295,172h1v1h-1zM296,172h1v1h-1zM297,172h1v1h-1zM298,172h1v1h-1zM299,172h1v1h-1zM300,172h1v1h-1zM301,172h1v1h-1zM302,172h1v1h-1zM303,172h1v1h-1zM304,172h1v1h-1zM305,172h1v1h-1zM306,172h1v1h-1zM307,172h1v1h-1zM308,172h1v1h-1zM309,172h1v1h-1zM310,172h1v1h-1zM311,172h1v1h-1zM312,172h1v1h-1zM313,171h1v2h-1zM314,171h1v2h-1zM315,172h1v1h-1zM316,172h1v1h-1zM317,172h1v1h-1zM318,172h1v1h-1zM319,172h1v1h-1zM320,172h1v1h-1zM321,172h1v1h-1zM322,172h1v1h-1zM323,172h1v1h-1zM324,172h1v1h-1zM325,172h1v1h-1zM326,172h1v1h-1zM327,172h1v1h-1zM328,172h1v1h-1zM329,172h1v1h-1zM330,172h1v1h-1zM331,172h1v1h-1zM332,172h1v1h-1zM333,172h1v1h-1zM334,172h1v1h-1zM335,172h1v1h-1zM336,172h1v1h-1zM337,171h1v2h-1zM338,171h1v2h-1zM339,172h1v1h-1zM340,172h1v1h-1zM341,172h1v1h-1zM342,172h1v1h-1zM343,172h1v1h-1zM344,172h1v1h-1zM345,172h1v1h-1zM346,172h1v1h-1zM347,172h1v1h-1zM348,172h1v1h-1zM349,172h1v1h-1zM350,172h1v1h-1zM351,172h1v1h-1zM352,172h1v1h-1zM353,172h1v1h-1zM354,172h1v1h-1zM355,172h1v1h-1zM356,172h1v1h-1zM357,172h1v1h-1zM358,172h1v1h-1zM359,172h1v1h-1zM360,172h1v1h-1zM361,172h1v1h-1zM362,172h1v1h-1zM363,172h1v1h-1zM364,172h1v1h-1zM365,172h1v1h-1zM366,172h1v1h-1zM367,172h1v1h-1zM368,172h1v1h-1zM369,172h1v1h-1zM370,172h1v1h-1zM371,172h1v1h-1zM372,172h1v1h-1zM373,172h1v1h-1zM374,172h1v1h-1zM375,172h1v1h-1zM376,172h1v1h-1zM377,172h1v1h-1zM378,172h1v1h-1zM379,172h1v1h-1zM380,172h1v1h-1zM381,172h1v1h-1zM382,172h1v1h-1zM383,172h1v1h-1zM384,172h1v1h-1zM385,172h1v1h-1zM386,172h1v1h-1zM387,172h1v1h-1zM388,172h1v1h-1zM389,172h1v1h-1zM390,172h1v1h-1zM391,172h1v1h-1zM392,172h1v1h-1zM393,172h1v1h-1zM394,172h1v1h-1zM395,172h1v1h-1zM396,172h1v1h-1zM397,172h1v1h-1zM398,172h1v1h-1zM399,172h1v1h-1zM400,172h1v1h-1zM401,172h1v1h-1zM402,172h1v1h-1zM403,172h1v1h-1zM404,172h1v1h-1zM405,172h1v1h-1zM406,172h1v1h-1zM407,172h1v1h-1zM408,172h1v1h-1zM409,172h1v1h-1zM410,172h1v1h-1zM411,172h1v1h-1zM412,172h1v1h-1zM413,172h1v1h-1zM414,172h1v1h-1zM415,172h1v1h-1zM416,172h1v1h-1zM417,172h1v1h-1zM418,172h1v1h-1zM419,172h1v1h-1zM420,172h1v1h-1zM421,172h1v1h-1zM422,172h1v1h-1zM423,172h1v1h-1zM424,172h1v1h-1zM425,172h1v1h-1zM426,172h1v1h-1zM427,172h1v1h-1zM428,172h1v1h-1zM429,172h1v1h-1zM430,172h1v1h-1zM431,172h1v1h-1zM432,172h1v1h-1zM433,172h1v1h-1zM434,171h1v2h-1zM435,171h1v2h-1zM436,172h1v1h-1zM437,172h1v1h-1zM438,172h1v1h-1zM439,172h1v1h-1zM440,172h1v1h-1zM441,172h1v1h-1zM442,172h1v1h-1zM443,172h1v1h-1zM444,172h1v1h-1zM445,172h1v1h-1zM446,172h1v1h-1zM447,172h1v1h-1zM448,172h1v1h-1zM449,172h1v1h-1zM450,172h1v1h-1zM451,172h1v1h-1zM452,172h1v1h-1zM453,172h1v1h-1zM454,172h1v1h-1zM455,172h1v1h-1zM456,172h1v1h-1zM457,172h1v1h-1zM458,172h1v1h-1zM459,172h1v1h-1zM460,172h1v2h-1zM461,172h1v2h-1zM462,172h1v1h-1zM463,171h1v2h-1zM464,171h1v2h-1zM465,172h1v1h-1zM466,172h1v1h-1zM467,172h1v1h-1zM468,172h1v1h-1zM469,172h1v1h-1zM470,172h1v1h-1zM471,172h1v1h-1zM472,172h1v1h-1zM473,172h1v1h-1zM474,172h1v1h-1zM475,172h1v1h-1zM476,172h1v1h-1zM477,172h1v1h-1zM478,172h1v1h-1zM479,172h1v1h-1zM480,172h1v1h-1zM481,172h1v1h-1zM482,172h1v1h-1zM483,172h1v1h-1zM484,172h1v1h-1zM485,172h1v1h-1zM486,172h1v1h-1zM487,172h1v1h-1zM488,172h1v1h-1zM489,172h1v1h-1zM490,172h1v1h-1zM491,172h1v1h-1zM492,172h1v1h-1zM493,172h1v1h-1zM494,172h1v1h-1zM495,172h1v1h-1zM496,172h1v1h-1zM497,172h1v1h-1zM498,172h1v1h-1zM499,172h1v1h-1zM500,172h1v1h-1zM501,172h1v1h-1zM502,172h1v1h-1zM503,172h1v1h-1zM504,172h1v1h-1zM505,172h1v1h-1zM506,172h1v1h-1zM507,172h1v1h-1zM508,172h1v1h-1zM509,172h1v1h-1zM510,172h1v1h-1zM511,172h1v1h-1zM512,172h1v1h-1zM513,172h1v1h-1zM514,172h1v1h-1zM515,172h1v1h-1zM516,172h1v1h-1zM517,172h1v1h-1zM518,172h1v1h-1zM519,172h1v1h-1zM520,172h1v1h-1zM521,172h1v1h-1zM522,172h1v1h-1zM523,172h1v1h-1zM524,172h1v1h-1zM525,172h1v1h-1zM526,172h1v2h-1zM527,172h1v2h-1zM528,172h1v1h-1zM529,172h1v2h-1zM530,172h1v2h-1zM531,172h1v1h-1zM532,172h1v1h-1zM533,172h1v1h-1zM534,172h1v1h-1zM535,172h1v1h-1zM536,172h1v1h-1zM537,172h1v1h-1zM538,172h1v1h-1zM539,172h1v1h-1zM540,172h1v1h-1zM541,172h1v1h-1zM542,172h1v1h-1zM543,172h1v1h-1zM544,172h1v1h-1zM545,172h1v1h-1zM546,172h1v1h-1zM547,172h1v1h-1zM548,172h1v1h-1zM549,172h1v1h-1zM550,172h1v1h-1zM551,172h1v1h-1zM552,172h1v1h-1zM553,172h1v1h-1zM554,172h1v1h-1zM555,172h1v1h-1zM556,172h1v1h-1zM557,172h1v1h-1zM558,172h1v1h-1zM559,172h1v1h-1zM560,172h1v1h-1zM561,172h1v1h-1zM562,172h1v1h-1zM563,172h1v1h-1zM564,172h1v1h-1zM565,172h1v1h-1zM566,172h1v1h-1zM567,172h1v1h-1zM568,172h1v1h-1zM569,172h1v1h-1zM570,172h1v1h-1zM571,172h1v1h-1zM572,172h1v1h-1zM573,172h1v1h-1zM574,172h1v1h-1zM575,172h1v1h-1zM576,172h1v1h-1zM577,172h1v1h-1zM578,172h1v1h-1zM579,172h1v1h-1zM580,172h1v1h-1zM581,172h1v1h-1zM582,172h1v2h-1zM583,172h1v2h-1zM584,171h1v2h-1zM585,171h1v2h-1zM586,172h1v1h-1zM587,172h1v1h-1zM588,172h1v1h-1zM589,172h1v1h-1zM590,172h1v1h-1zM591,172h1v1h-1zM592,172h1v1h-1zM593,172h1v1h-1zM594,172h1v1h-1zM595,172h1v1h-1zM596,172h1v1h-1zM597,172h1v1h-1zM598,172h1v1h-1zM599,172h1v1h-1zM600,172h1v1h-1zM601,172h1v1h-1zM602,172h1v1h-1zM603,172h1v1h-1zM604,172h1v1h-1zM605,172h1v1h-1zM606,172h1v1h-1zM607,172h1v1h-1zM608,172h1v1h-1zM609,172h1v1h-1zM610,172h1v1h-1zM611,172h1v1h-1zM612,172h1v1h-1zM613,172h1v1h-1zM614,172h1v1h-1zM615,172h1v1h-1zM616,172h1v1h-1zM617,172h1v1h-1zM618,172h1v1h-1zM619,172h1v1h-1zM620,172h1v1h-1zM621,172h1v1h-1zM622,172h1v1h-1zM623,172h1v1h-1zM624,172h1v1h-1zM625,172h1v1h-1zM626,172h1v1h-1zM627,172h1v1h-1zM628,172h1v1h-1zM629,171h1v2h-1zM630,171h1v2h-1zM631,172h1v1h-1zM632,172h1v1h-1zM633,172h1v1h-1zM634,172h1v1h-1zM635,171h1v2h-1zM636,171h1v2h-1zM637,172h1v1h-1zM638,172h1v1h-1zM639,172h1v1h-1zM640,172h1v1h-1zM641,172h1v1h-1zM642,172h1v1h-1zM643,172h1v1h-1zM644,172h1v1h-1zM645,172h1v1h-1zM646,172h1v1h-1zM647,172h1v1h-1zM648,172h1v1h-1zM649,172h1v1h-1zM650,172h1v1h-1zM651,172h1v1h-1zM652,172h1v1h-1zM653,172h1v1h-1zM654,172h1v1h-1zM655,172h1v1h-1zM656,172h1v1h-1zM657,172h1v1h-1zM658,172h1v1h-1zM659,172h1v1h-1zM660,172h1v1h-1zM661,172h1v1h-1zM662,172h1v1h-1zM663,172h1v1h-1zM664,172h1v1h-1zM665,172h1v1h-1zM666,172h1v1h-1zM667,172h1v1h-1zM668,172h1v1h-1z" fill="#ffffff"/>
<rect x="86" y="148" width="1" height="22" fill="#80ffff" />
<rect x="86" y="175" width="1" height="257" fill="#80ffff" />
<rect x="85" y="171" width="1" height="1" fill="#80ffff" />
<rect x="85" y="173" width="1" height="1" fill="#80ffff" />
<rect x="87" y="171" width="1" height="1" fill="#80ffff" />
<rect x="87" y="173" width="1" height="1" fill="#80ffff" />
<rect x="84" y="170" width="1" height="1" fill="#80ffff" />
<rect x="84" y="174" width="1" height="1" fill="#80ffff" />
<rect x="88" y="170" width="1" height="1" fill="#80ffff" />
<rect x="88" y="174" width="1" height="1" fill="#80ffff" />
<rect x="86" y="172" width="1" height="1" fill="#80ffff" />
<rect x="81" y="172" width="3" height="1" fill="#80ffff" />
<rect x="89" y="172" width="3" height="1" fill="#80ffff" />
<rect x="128" y="148" width="1" height="22" fill="#3399ff" />
<rect x="128" y="175" width="1" height="257" fill="#3399ff" />
<rect x="127" y="171" width="1" height="1" fill="#3399ff" />
<rect x="127" y="173" width="1" height="1" fill="#3399ff" />
<rect x="129" y="171" width="1" height="1" fill="#3399ff" />
<rect x="129" y="173" width="1" height="1" fill="#3399ff" />
<rect x="126" y="170" width="1" height="1" fill="#3399ff" />
<rect x="126" y="174" width="1" height="1" fill="#3399ff" />
<rect x="130" y="170" width="1" height="1" fill="#3399ff" />
<rect x="130" y="174" width="1" height="1" fill="#3399ff" />
<rect x="128" y="172" width="1" height="1" fill="#3399ff" />
<rect x="123" y="172" width="3" height="1" fill="#3399ff" />
<rect x="131" y="172" width="3" height="1" fill="#3399ff" />
<rect x="229" y="148" width="1" height="22" fill="#ff0000" />
<rect x="229" y="175" width="1" height="257" fill="#ff0000" />
<rect x="228" y="171" width="1" height="1" fill="#ff0000" />
<rect x="228" y="173" width="1" height="1" fill="#ff0000" />
<rect x="230" y="171" width="1" height="1" fill="#ff0000" />
<rect x="230" y="173" width="1" height="1" fill="#ff0000" />
<rect x="227" y="170" width="1" height="1" fill="#ff0000" />
<rect x="227" y="174" width="1" height="1" fill="#ff0000" />
<rect x="231" y="170" width="1" height="1" fill="#ff0000" />
<rect x="231" y="174" width="1" height="1" fill="#ff0000" />
<rect x="229" y="172" width="1" height="1" fill="#ff0000" />
<rect x="224" y="172" width="3" height="1" fill="#ff0000" />
<rect x="232" y="172" width="3" height="1" fill="#ff0000" />
<rect x="0" y="474" width="87" height="24" fill="#bebebe" />
<rect x="0" y="474" width="87" height="2" fill="#cfcfcf" />
<polygon points="72,476 87,474 87,498 72,496" fill="url(#g32)" />
<rect x="0" y="496" width="87" height="2" fill="url(#g33)" />
<rect x="11" y="479" width="20" height="16" fill="#7f7f7f" />
<rect x="11" y="479" width="20" height="1" fill="#6a6a6a" />
<rect x="11" y="479" width="1" height="16" fill="#6a6a6a" />
<rect x="11" y="494" width="20" height="1" fill="#9a9a9a" />
<rect x="30" y="479" width="1" height="16" fill="#9a9a9a" />
<rect x="21" y="481" width="1" height="13" fill="#000" />
<rect x="15" y="487" width="13" height="1" fill="#000" />
<circle cx="21.5" cy="487.5" r="1.6" fill="#7f7f7f" stroke="#000" stroke-width="1"/>
<rect x="14" y="482" width="3" height="3" fill="#38f020" />
<rect x="15" y="481" width="1" height="5" fill="#38e020" />
<rect x="13" y="483" width="5" height="1" fill="#38e020" />
<rect x="15" y="483" width="1" height="1" fill="#c0ffb0" />
<rect x="33" y="479" width="19" height="16" fill="url(#g34)" />
<rect x="33" y="479" width="19" height="1" fill="#d8d8d8" />
<rect x="33" y="479" width="1" height="16" fill="#d4d4d4" />
<rect x="33" y="494" width="19" height="1" fill="#8e8e8e" />
<rect x="51" y="479" width="1" height="16" fill="#a2a2a2" />
<rect x="35" y="482" width="3" height="3" fill="#4a7a4a" />
<rect x="36" y="483" width="1" height="1" fill="#2f6a2f" />
<rect x="54" y="479" width="19" height="16" fill="url(#g35)" />
<rect x="54" y="479" width="19" height="1" fill="#d8d8d8" />
<rect x="54" y="479" width="1" height="16" fill="#d4d4d4" />
<rect x="54" y="494" width="19" height="1" fill="#8e8e8e" />
<rect x="72" y="479" width="1" height="16" fill="#a2a2a2" />
<rect x="56" y="482" width="3" height="3" fill="#4a7a4a" />
<rect x="57" y="483" width="1" height="1" fill="#2f6a2f" />
<g shape-rendering="auto">
<path d="M36.3,493.6 L40.6,489.3" stroke="#000" stroke-width="2.4" fill="none"/>
<path d="M37,492.9 L40,489.9" stroke="#ddd" stroke-width="0.8" stroke-dasharray="1 1" fill="none"/>
<circle cx="44.5" cy="485.5" r="3.8" fill="#dcdcff" stroke="#000" stroke-width="1.1"/>
<path d="M42,485.5h5M44.5,483v5" stroke="#000" stroke-width="1.1" fill="none"/>
<polygon points="44,491 49,491 46.5,494" fill="#000" />
<path d="M60.5,488 L60.5,482.6 Q61.5,480.6 62.5,482.2 L62.5,486.5 M62.5,482 Q63.5,479.8 64.5,481.6 L64.5,486.5 M64.5,481.8 Q65.6,480 66.6,482 L66.6,486.8 M66.6,483.4 Q67.8,482.2 68.6,484.4 L68.8,489.6 L66.6,493.4 M60.5,488 L59,485.8 Q57.4,485.4 57.4,487 L60.2,491.6 L61.4,493.4" fill="none" stroke="#000" stroke-width="1.1" stroke-linecap="round" stroke-linejoin="round"/>
</g>
<text x="180.3" y="497.6" font-size="13" font-weight="normal" fill="#000" text-anchor="start" textLength="29.7" lengthAdjust="spacingAndGlyphs" >Peaks</text>
<polygon points="213,477 425,477 421,481 217,481" fill="url(#g36)" />
<polygon points="213,509 425,509 421,505 217,505" fill="#c2c2c2" />
<polygon points="213,477 217,481 217,505 213,509" fill="url(#g37)" />
<polygon points="425,477 421,481 421,505 425,509" fill="#c2c2c2" />
<rect x="217" y="481" width="204" height="24" fill="#b2b2b2" />
<polygon points="217,481 285,481 281,485 221,485" fill="url(#g38)" />
<polygon points="217,505 285,505 281,501 221,501" fill="#bcbcbc" />
<polygon points="217,481 221,485 221,501 217,505" fill="url(#g39)" />
<polygon points="285,481 281,485 281,501 285,505" fill="#bcbcbc" />
<rect x="221" y="485" width="60" height="16" fill="#d4d4d4" />
<text x="223.5" y="497.6" font-size="13" font-weight="normal" fill="#000" text-anchor="start" textLength="27" lengthAdjust="spacingAndGlyphs" >0.000</text>
<polygon points="285,481 353,481 349,485 289,485" fill="url(#g40)" />
<polygon points="285,505 353,505 349,501 289,501" fill="#bcbcbc" />
<polygon points="285,481 289,485 289,501 285,505" fill="url(#g41)" />
<polygon points="353,481 349,485 349,501 353,505" fill="#bcbcbc" />
<rect x="289" y="485" width="60" height="16" fill="#d4d4d4" />
<text x="291.5" y="497.6" font-size="13" font-weight="normal" fill="#000" text-anchor="start" textLength="27" lengthAdjust="spacingAndGlyphs" >0.000</text>
<polygon points="353,481 421,481 417,485 357,485" fill="url(#g42)" />
<polygon points="353,505 421,505 417,501 357,501" fill="#bcbcbc" />
<polygon points="353,481 357,485 357,501 353,505" fill="url(#g43)" />
<polygon points="421,481 417,485 417,501 421,505" fill="#bcbcbc" />
<rect x="357" y="485" width="60" height="16" fill="#c9c9c9" />
<text x="359.5" y="497.6" font-size="13" font-weight="normal" fill="#808080" text-anchor="start" textLength="27" lengthAdjust="spacingAndGlyphs" >0.000</text>
<rect x="465" y="474" width="96" height="23" fill="#c0c0c0" />
<rect x="465" y="474" width="11" height="23" fill="url(#g44)" />
<rect x="465" y="474" width="96" height="1" fill="#d0d0d0" />
<polygon points="549,475 561,474 561,497 549,496" fill="url(#g45)" />
<rect x="465" y="495" width="96" height="2" fill="url(#g46)" />
<text x="480" y="488.6" font-size="13" font-weight="normal" fill="#000" text-anchor="start" textLength="26.7" lengthAdjust="spacingAndGlyphs" >SiPM</text>
<rect x="518" y="476" width="29" height="19" fill="#000" />
<rect x="518" y="476" width="29" height="1" fill="#6a6a6a" />
<rect x="518" y="476" width="1" height="19" fill="#6a6a6a" />
<rect x="518" y="494" width="29" height="1" fill="#ececec" />
<rect x="546" y="476" width="1" height="19" fill="#ececec" />
<polyline points="520,489.5 528.5,479.5 536,489.5 545,479.5" fill="none" stroke="#fff" stroke-width="1.2"/>
<rect x="561" y="474" width="136" height="34" fill="#c0c0c0" />
<rect x="561" y="474" width="11" height="34" fill="url(#g47)" />
<rect x="561" y="506" width="136" height="2" fill="url(#g48)" />
<rect x="561" y="474" width="132" height="1" fill="#d6d6d6" />
<rect x="565" y="475" width="128" height="17" fill="#bbbbbb" />
<rect x="565" y="475" width="16" height="17" fill="#bcbcbc" />
<rect x="565" y="475" width="16" height="1" fill="#e4e4e4" />
<rect x="565" y="475" width="1" height="17" fill="#e4e4e4" />
<rect x="565" y="491" width="16" height="1" fill="#6e6e6e" />
<rect x="580" y="475" width="1" height="17" fill="#6e6e6e" />
<rect x="566" y="490" width="14" height="1" fill="#a0a0a0" />
<rect x="579" y="476" width="1" height="15" fill="#a0a0a0" />
<polygon points="569.0,483.5 576.0,480.0 576.0,487.0" fill="#808080" />
<rect x="676" y="475" width="17" height="17" fill="#bcbcbc" />
<rect x="676" y="475" width="17" height="1" fill="#e4e4e4" />
<rect x="676" y="475" width="1" height="17" fill="#e4e4e4" />
<rect x="676" y="491" width="17" height="1" fill="#6e6e6e" />
<rect x="692" y="475" width="1" height="17" fill="#6e6e6e" />
<rect x="677" y="490" width="15" height="1" fill="#a0a0a0" />
<rect x="691" y="476" width="1" height="15" fill="#a0a0a0" />
<polygon points="688.5,483.5 681.5,480.0 681.5,487.0" fill="#808080" />
<polygon points="679,492 693,492 693,508 679,506" fill="url(#g49)" />
<rect x="693" y="474" width="4" height="34" fill="#b4b4b4" />
<rect x="692" y="474" width="1" height="34" fill="#505050" />
<clipPath id="lc"><rect x="565" y="492.4" width="127" height="12.6"/></clipPath>
<g clip-path="url(#lc)">
<text x="576.5" y="500" font-size="13" font-weight="normal" fill="#000" text-anchor="start" textLength="62" lengthAdjust="spacingAndGlyphs" >mcpF - 1 nF</text>
</g>
<rect x="650" y="492" width="28" height="13" fill="#000" />
<rect x="650" y="505" width="29" height="1" fill="#e8e8e8" />
<rect x="678" y="492" width="1" height="13" fill="#e8e8e8" />
<clipPath id="lc2"><rect x="650" y="492" width="28" height="13"/></clipPath>
<polyline clip-path="url(#lc2)" points="652.3,500.9 660.5,490.5 668.2,500.4 676.5,490" fill="none" stroke="#80ff00" stroke-width="1.2"/>
<rect x="0" y="510" width="693" height="300" fill="#bfbfbf" />
<rect x="0" y="510" width="10" height="300" fill="url(#g50)" />
<rect x="0" y="510" width="693" height="2" fill="#d3d3d3" />
<polygon points="680,512 693,510 693,810 680,810" fill="url(#g51)" />
<rect x="680" y="510" width="11" height="2" fill="url(#g52)" />
<rect x="0" y="807" width="693" height="3" fill="url(#g53)" />
<rect x="0" y="810" width="84" height="2" fill="#cecece" />
<rect x="84" y="810" width="333" height="2" fill="#b9b9b9" />
<rect x="417" y="810" width="276" height="2" fill="#cecece" />
<rect x="84" y="811" width="3" height="1" fill="#555" />
<rect x="84" y="519" width="586" height="250" fill="#5a5a5a" />
<rect x="85" y="768" width="585" height="1" fill="#f2f2f2" />
<rect x="669" y="520" width="1" height="249" fill="#f2f2f2" />
<rect x="85" y="520" width="584" height="248" fill="#000" />
<rect x="97" y="520" width="1" height="248" fill="#003c00" />
<rect x="108" y="520" width="1" height="248" fill="#003c00" />
<rect x="120" y="520" width="1" height="248" fill="#003c00" />
<rect x="132" y="520" width="1" height="248" fill="#003c00" />
<rect x="155" y="520" width="1" height="248" fill="#003c00" />
<rect x="167" y="520" width="1" height="248" fill="#003c00" />
<rect x="178" y="520" width="1" height="248" fill="#003c00" />
<rect x="190" y="520" width="1" height="248" fill="#003c00" />
<rect x="213" y="520" width="1" height="248" fill="#003c00" />
<rect x="225" y="520" width="1" height="248" fill="#003c00" />
<rect x="237" y="520" width="1" height="248" fill="#003c00" />
<rect x="248" y="520" width="1" height="248" fill="#003c00" />
<rect x="272" y="520" width="1" height="248" fill="#003c00" />
<rect x="283" y="520" width="1" height="248" fill="#003c00" />
<rect x="295" y="520" width="1" height="248" fill="#003c00" />
<rect x="307" y="520" width="1" height="248" fill="#003c00" />
<rect x="330" y="520" width="1" height="248" fill="#003c00" />
<rect x="342" y="520" width="1" height="248" fill="#003c00" />
<rect x="353" y="520" width="1" height="248" fill="#003c00" />
<rect x="365" y="520" width="1" height="248" fill="#003c00" />
<rect x="388" y="520" width="1" height="248" fill="#003c00" />
<rect x="400" y="520" width="1" height="248" fill="#003c00" />
<rect x="411" y="520" width="1" height="248" fill="#003c00" />
<rect x="423" y="520" width="1" height="248" fill="#003c00" />
<rect x="446" y="520" width="1" height="248" fill="#003c00" />
<rect x="458" y="520" width="1" height="248" fill="#003c00" />
<rect x="470" y="520" width="1" height="248" fill="#003c00" />
<rect x="481" y="520" width="1" height="248" fill="#003c00" />
<rect x="505" y="520" width="1" height="248" fill="#003c00" />
<rect x="516" y="520" width="1" height="248" fill="#003c00" />
<rect x="528" y="520" width="1" height="248" fill="#003c00" />
<rect x="540" y="520" width="1" height="248" fill="#003c00" />
<rect x="563" y="520" width="1" height="248" fill="#003c00" />
<rect x="575" y="520" width="1" height="248" fill="#003c00" />
<rect x="586" y="520" width="1" height="248" fill="#003c00" />
<rect x="598" y="520" width="1" height="248" fill="#003c00" />
<rect x="621" y="520" width="1" height="248" fill="#003c00" />
<rect x="633" y="520" width="1" height="248" fill="#003c00" />
<rect x="645" y="520" width="1" height="248" fill="#003c00" />
<rect x="656" y="520" width="1" height="248" fill="#003c00" />
<rect x="85" y="529" width="584" height="1" fill="#003c00" />
<rect x="85" y="538" width="584" height="1" fill="#003c00" />
<rect x="85" y="546" width="584" height="1" fill="#003c00" />
<rect x="85" y="564" width="584" height="1" fill="#003c00" />
<rect x="85" y="573" width="584" height="1" fill="#003c00" />
<rect x="85" y="582" width="584" height="1" fill="#003c00" />
<rect x="85" y="599" width="584" height="1" fill="#003c00" />
<rect x="85" y="608" width="584" height="1" fill="#003c00" />
<rect x="85" y="617" width="584" height="1" fill="#003c00" />
<rect x="85" y="635" width="584" height="1" fill="#003c00" />
<rect x="85" y="643" width="584" height="1" fill="#003c00" />
<rect x="85" y="652" width="584" height="1" fill="#003c00" />
<rect x="85" y="670" width="584" height="1" fill="#003c00" />
<rect x="85" y="679" width="584" height="1" fill="#003c00" />
<rect x="85" y="688" width="584" height="1" fill="#003c00" />
<rect x="85" y="705" width="584" height="1" fill="#003c00" />
<rect x="85" y="714" width="584" height="1" fill="#003c00" />
<rect x="85" y="723" width="584" height="1" fill="#003c00" />
<rect x="85" y="741" width="584" height="1" fill="#003c00" />
<rect x="85" y="749" width="584" height="1" fill="#003c00" />
<rect x="85" y="758" width="584" height="1" fill="#003c00" />
<rect x="143" y="520" width="1" height="248" fill="#007000" />
<rect x="202" y="520" width="1" height="248" fill="#007000" />
<rect x="260" y="520" width="1" height="248" fill="#007000" />
<rect x="318" y="520" width="1" height="248" fill="#007000" />
<rect x="377" y="520" width="1" height="248" fill="#007000" />
<rect x="435" y="520" width="1" height="248" fill="#007000" />
<rect x="493" y="520" width="1" height="248" fill="#007000" />
<rect x="551" y="520" width="1" height="248" fill="#007000" />
<rect x="610" y="520" width="1" height="248" fill="#007000" />
<rect x="85" y="555" width="584" height="1" fill="#007000" />
<rect x="85" y="591" width="584" height="1" fill="#007000" />
<rect x="85" y="626" width="584" height="1" fill="#007000" />
<rect x="85" y="661" width="584" height="1" fill="#007000" />
<rect x="85" y="696" width="584" height="1" fill="#007000" />
<rect x="85" y="732" width="584" height="1" fill="#007000" />
<rect x="78" y="520" width="5" height="1" fill="#000" />
<text x="75.8" y="524.5" font-size="13" font-weight="normal" fill="#000" text-anchor="end" textLength="28" lengthAdjust="spacingAndGlyphs" >600m</text>
<rect x="78" y="555" width="5" height="1" fill="#000" />
<text x="75.8" y="559.5" font-size="13" font-weight="normal" fill="#000" text-anchor="end" textLength="28" lengthAdjust="spacingAndGlyphs" >400m</text>
<rect x="78" y="591" width="5" height="1" fill="#000" />
<text x="75.8" y="595.5" font-size="13" font-weight="normal" fill="#000" text-anchor="end" textLength="28" lengthAdjust="spacingAndGlyphs" >200m</text>
<rect x="78" y="626" width="5" height="1" fill="#000" />
<text x="75.8" y="630.5" font-size="13" font-weight="normal" fill="#000" text-anchor="end" textLength="20.5" lengthAdjust="spacingAndGlyphs" >0.00</text>
<rect x="78" y="661" width="5" height="1" fill="#000" />
<text x="75.8" y="665.5" font-size="13" font-weight="normal" fill="#000" text-anchor="end" textLength="33" lengthAdjust="spacingAndGlyphs" >-200m</text>
<rect x="78" y="696" width="5" height="1" fill="#000" />
<text x="75.8" y="700.5" font-size="13" font-weight="normal" fill="#000" text-anchor="end" textLength="33" lengthAdjust="spacingAndGlyphs" >-400m</text>
<rect x="78" y="732" width="5" height="1" fill="#000" />
<text x="75.8" y="736.5" font-size="13" font-weight="normal" fill="#000" text-anchor="end" textLength="33" lengthAdjust="spacingAndGlyphs" >-600m</text>
<rect x="78" y="767" width="5" height="1" fill="#000" />
<text x="75.8" y="771.5" font-size="13" font-weight="normal" fill="#000" text-anchor="end" textLength="33" lengthAdjust="spacingAndGlyphs" >-800m</text>
<rect x="85" y="770" width="1" height="5" fill="#000" />
<text x="85.1" y="786.6" font-size="13" font-weight="normal" fill="#000" text-anchor="middle" textLength="27" lengthAdjust="spacingAndGlyphs" >0.000</text>
<rect x="143" y="770" width="1" height="5" fill="#000" />
<text x="143.1" y="786.6" font-size="13" font-weight="normal" fill="#000" text-anchor="middle" textLength="38.8" lengthAdjust="spacingAndGlyphs" >10.000u</text>
<rect x="202" y="770" width="1" height="5" fill="#000" />
<text x="202.1" y="786.6" font-size="13" font-weight="normal" fill="#000" text-anchor="middle" textLength="38.8" lengthAdjust="spacingAndGlyphs" >20.000u</text>
<rect x="260" y="770" width="1" height="5" fill="#000" />
<text x="260.1" y="786.6" font-size="13" font-weight="normal" fill="#000" text-anchor="middle" textLength="38.8" lengthAdjust="spacingAndGlyphs" >30.000u</text>
<rect x="318" y="770" width="1" height="5" fill="#000" />
<text x="318.1" y="786.6" font-size="13" font-weight="normal" fill="#000" text-anchor="middle" textLength="38.8" lengthAdjust="spacingAndGlyphs" >40.000u</text>
<rect x="377" y="770" width="1" height="5" fill="#000" />
<text x="377.1" y="786.6" font-size="13" font-weight="normal" fill="#000" text-anchor="middle" textLength="38.8" lengthAdjust="spacingAndGlyphs" >50.000u</text>
<rect x="435" y="770" width="1" height="5" fill="#000" />
<text x="435.1" y="786.6" font-size="13" font-weight="normal" fill="#000" text-anchor="middle" textLength="38.8" lengthAdjust="spacingAndGlyphs" >60.000u</text>
<rect x="493" y="770" width="1" height="5" fill="#000" />
<text x="493.1" y="786.6" font-size="13" font-weight="normal" fill="#000" text-anchor="middle" textLength="38.8" lengthAdjust="spacingAndGlyphs" >70.000u</text>
<rect x="551" y="770" width="1" height="5" fill="#000" />
<text x="551.1" y="786.6" font-size="13" font-weight="normal" fill="#000" text-anchor="middle" textLength="38.8" lengthAdjust="spacingAndGlyphs" >80.000u</text>
<rect x="610" y="770" width="1" height="5" fill="#000" />
<text x="610.1" y="786.6" font-size="13" font-weight="normal" fill="#000" text-anchor="middle" textLength="38.8" lengthAdjust="spacingAndGlyphs" >90.000u</text>
<rect x="668" y="770" width="1" height="5" fill="#000" />
<text x="668.1" y="786.6" font-size="13" font-weight="normal" fill="#000" text-anchor="middle" textLength="44.6" lengthAdjust="spacingAndGlyphs" >100.000u</text>
<text x="380" y="803.2" font-size="13" font-weight="normal" fill="#000" text-anchor="middle" textLength="40" lengthAdjust="spacingAndGlyphs" >Time (s)</text>
<text transform="translate(35.3,644) rotate(-90)" font-size="13" text-anchor="middle" textLength="73" lengthAdjust="spacingAndGlyphs">Amplitude (V)</text>
<path d="M85,750h1v2h-1zM86,749h1v2h-1zM87,750h1v2h-1zM88,750h1v2h-1zM89,749h1v3h-1zM90,750h1v3h-1zM91,749h1v3h-1zM92,750h1v4h-1zM93,750h1v2h-1zM94,750h1v2h-1zM95,749h1v3h-1zM96,750h1v2h-1zM97,750h1v2h-1zM98,750h1v2h-1zM99,750h1v3h-1zM100,750h1v2h-1zM101,750h1v2h-1zM102,750h1v3h-1zM103,750h1v3h-1zM104,750h1v2h-1zM105,751h1v2h-1zM106,750h1v2h-1zM107,749h1v2h-1zM108,749h1v3h-1zM109,751h1v2h-1zM110,749h1v3h-1zM111,748h1v5h-1zM112,750h1v2h-1zM113,749h1v3h-1zM114,750h1v2h-1zM115,750h1v2h-1zM116,750h1v2h-1zM117,750h1v2h-1zM118,751h1v2h-1zM119,750h1v2h-1zM120,750h1v2h-1zM121,751h1v2h-1zM122,751h1v2h-1zM123,750h1v3h-1zM124,751h1v3h-1zM125,751h1v2h-1zM126,751h1v3h-1zM127,749h1v3h-1zM128,749h1v3h-1zM129,750h1v2h-1zM130,750h1v2h-1zM131,750h1v2h-1zM132,749h1v4h-1zM133,749h1v2h-1zM134,750h1v2h-1zM135,750h1v2h-1zM136,750h1v2h-1zM137,750h1v2h-1zM138,750h1v3h-1zM139,750h1v4h-1zM140,749h1v3h-1zM141,750h1v2h-1zM142,750h1v4h-1zM143,750h1v4h-1zM144,750h1v2h-1zM145,750h1v2h-1zM146,749h1v2h-1zM147,750h1v3h-1zM148,750h1v3h-1zM149,671h1v82h-1zM150,606h1v66h-1zM151,563h1v44h-1zM152,556h1v8h-1zM153,555h1v2h-1zM154,553h1v3h-1zM155,552h1v3h-1zM156,552h1v2h-1zM157,551h1v3h-1zM158,552h1v2h-1zM159,551h1v2h-1zM160,550h1v3h-1zM161,550h1v2h-1zM162,551h1v2h-1zM163,551h1v2h-1zM164,551h1v2h-1zM165,551h1v3h-1zM166,550h1v3h-1zM167,550h1v3h-1zM168,550h1v2h-1zM169,550h1v2h-1zM170,549h1v4h-1zM171,551h1v2h-1zM172,549h1v3h-1zM173,550h1v3h-1zM174,550h1v2h-1zM175,550h1v2h-1zM176,551h1v2h-1zM177,550h1v2h-1zM178,549h1v3h-1zM179,549h1v3h-1zM180,550h1v2h-1zM181,550h1v2h-1zM182,550h1v3h-1zM183,550h1v4h-1zM184,550h1v3h-1zM185,551h1v2h-1zM186,551h1v2h-1zM187,552h1v2h-1zM188,551h1v2h-1zM189,552h1v2h-1zM190,550h1v4h-1zM191,552h1v2h-1zM192,551h1v3h-1zM193,552h1v2h-1zM194,552h1v2h-1zM195,552h1v2h-1zM196,553h1v2h-1zM197,554h1v3h-1zM198,552h1v3h-1zM199,553h1v2h-1zM200,551h1v4h-1zM201,554h1v2h-1zM202,554h1v2h-1zM203,552h1v3h-1zM204,553h1v2h-1zM205,554h1v2h-1zM206,554h1v2h-1zM207,554h1v3h-1zM208,554h1v2h-1zM209,555h1v2h-1zM210,556h1v2h-1zM211,555h1v3h-1zM212,556h1v2h-1zM213,554h1v3h-1zM214,556h1v2h-1zM215,556h1v2h-1zM216,557h1v2h-1zM217,556h1v2h-1zM218,556h1v3h-1zM219,557h1v4h-1zM220,556h1v2h-1zM221,557h1v2h-1zM222,557h1v4h-1zM223,558h1v2h-1zM224,558h1v2h-1zM225,558h1v2h-1zM226,558h1v2h-1zM227,557h1v4h-1zM228,559h1v2h-1zM229,559h1v3h-1zM230,559h1v2h-1zM231,560h1v2h-1zM232,560h1v2h-1zM233,561h1v2h-1zM234,560h1v2h-1zM235,561h1v2h-1zM236,561h1v2h-1zM237,562h1v2h-1zM238,562h1v2h-1zM239,562h1v4h-1zM240,562h1v3h-1zM241,563h1v4h-1zM242,563h1v2h-1zM243,563h1v3h-1zM244,564h1v2h-1zM245,563h1v3h-1zM246,564h1v2h-1zM247,564h1v2h-1zM248,565h1v4h-1zM249,565h1v3h-1zM250,565h1v2h-1zM251,566h1v2h-1zM252,566h1v2h-1zM253,567h1v2h-1zM254,566h1v3h-1zM255,567h1v2h-1zM256,568h1v2h-1zM257,568h1v2h-1zM258,568h1v2h-1zM259,569h1v2h-1zM260,569h1v2h-1zM261,570h1v2h-1zM262,569h1v2h-1zM263,570h1v3h-1zM264,570h1v2h-1zM265,571h1v2h-1zM266,571h1v2h-1zM267,571h1v2h-1zM268,571h1v3h-1zM269,570h1v4h-1zM270,573h1v2h-1zM271,572h1v3h-1zM272,573h1v2h-1zM273,573h1v3h-1zM274,574h1v2h-1zM275,575h1v2h-1zM276,575h1v2h-1zM277,574h1v3h-1zM278,576h1v2h-1zM279,574h1v4h-1zM280,577h1v2h-1zM281,576h1v2h-1zM282,577h1v2h-1zM283,576h1v3h-1zM284,578h1v3h-1zM285,577h1v3h-1zM286,579h1v4h-1zM287,579h1v2h-1zM288,580h1v2h-1zM289,580h1v3h-1zM290,581h1v3h-1zM291,581h1v2h-1zM292,582h1v2h-1zM293,581h1v2h-1zM294,582h1v3h-1zM295,582h1v2h-1zM296,583h1v2h-1zM297,583h1v3h-1zM298,584h1v2h-1zM299,584h1v2h-1zM300,585h1v2h-1zM301,585h1v2h-1zM302,585h1v3h-1zM303,586h1v2h-1zM304,586h1v4h-1zM305,586h1v4h-1zM306,585h1v4h-1zM307,587h1v3h-1zM308,588h1v2h-1zM309,588h1v2h-1zM310,587h1v3h-1zM311,589h1v2h-1zM312,589h1v2h-1zM313,590h1v2h-1zM314,590h1v2h-1zM315,591h1v2h-1zM316,589h1v4h-1zM317,592h1v3h-1zM318,591h1v3h-1zM319,592h1v2h-1zM320,593h1v2h-1zM321,593h1v4h-1zM322,594h1v2h-1zM323,594h1v2h-1zM324,595h1v2h-1zM325,595h1v3h-1zM326,595h1v2h-1zM327,595h1v4h-1zM328,597h1v3h-1zM329,597h1v2h-1zM330,597h1v2h-1zM331,597h1v2h-1zM332,598h1v2h-1zM333,597h1v3h-1zM334,597h1v4h-1zM335,600h1v3h-1zM336,599h1v3h-1zM337,598h1v4h-1zM338,601h1v2h-1zM339,600h1v3h-1zM340,601h1v2h-1zM341,601h1v2h-1zM342,601h1v3h-1zM343,602h1v2h-1zM344,603h1v2h-1zM345,602h1v3h-1zM346,604h1v2h-1zM347,604h1v3h-1zM348,605h1v2h-1zM349,605h1v2h-1zM350,605h1v2h-1zM351,606h1v2h-1zM352,606h1v2h-1zM353,607h1v2h-1zM354,608h1v3h-1zM355,608h1v2h-1zM356,608h1v4h-1zM357,609h1v3h-1zM358,608h1v2h-1zM359,609h1v3h-1zM360,611h1v2h-1zM361,610h1v3h-1zM362,611h1v2h-1zM363,611h1v2h-1zM364,611h1v2h-1zM365,612h1v2h-1zM366,612h1v2h-1zM367,613h1v2h-1zM368,613h1v2h-1zM369,614h1v2h-1zM370,615h1v2h-1zM371,614h1v3h-1zM372,616h1v2h-1zM373,616h1v2h-1zM374,617h1v2h-1zM375,616h1v2h-1zM376,617h1v2h-1zM377,617h1v2h-1zM378,618h1v3h-1zM379,618h1v2h-1zM380,617h1v3h-1zM381,619h1v2h-1zM382,619h1v3h-1zM383,620h1v2h-1zM384,620h1v2h-1zM385,621h1v2h-1zM386,621h1v2h-1zM387,621h1v4h-1zM388,621h1v3h-1zM389,621h1v3h-1zM390,622h1v2h-1zM391,621h1v3h-1zM392,623h1v3h-1zM393,624h1v2h-1zM394,624h1v3h-1zM395,624h1v3h-1zM396,625h1v3h-1zM397,625h1v2h-1zM398,626h1v2h-1zM399,627h1v2h-1zM400,627h1v2h-1zM401,627h1v2h-1zM402,627h1v3h-1zM403,627h1v2h-1zM404,628h1v3h-1zM405,628h1v5h-1zM406,629h1v2h-1zM407,629h1v3h-1zM408,630h1v2h-1zM409,630h1v2h-1zM410,630h1v4h-1zM411,631h1v2h-1zM412,631h1v2h-1zM413,632h1v2h-1zM414,632h1v2h-1zM415,633h1v2h-1zM416,633h1v2h-1zM417,634h1v2h-1zM418,634h1v2h-1zM419,634h1v2h-1zM420,635h1v2h-1zM421,635h1v3h-1zM422,635h1v3h-1zM423,635h1v2h-1zM424,636h1v4h-1zM425,637h1v2h-1zM426,638h1v2h-1zM427,637h1v2h-1zM428,638h1v3h-1zM429,638h1v2h-1zM430,639h1v2h-1zM431,639h1v2h-1zM432,640h1v2h-1zM433,640h1v2h-1zM434,640h1v2h-1zM435,641h1v2h-1zM436,641h1v2h-1zM437,642h1v2h-1zM438,642h1v2h-1zM439,643h1v2h-1zM440,643h1v4h-1zM441,644h1v2h-1zM442,644h1v2h-1zM443,643h1v3h-1zM444,645h1v2h-1zM445,644h1v3h-1zM446,646h1v2h-1zM447,646h1v2h-1zM448,647h1v2h-1zM449,646h1v2h-1zM450,647h1v2h-1zM451,647h1v3h-1zM452,648h1v2h-1zM453,648h1v3h-1zM454,649h1v2h-1zM455,650h1v2h-1zM456,648h1v3h-1zM457,650h1v2h-1zM458,650h1v3h-1zM459,649h1v4h-1zM460,652h1v2h-1zM461,651h1v3h-1zM462,653h1v2h-1zM463,653h1v2h-1zM464,653h1v3h-1zM465,654h1v2h-1zM466,654h1v2h-1zM467,653h1v4h-1zM468,654h1v4h-1zM469,654h1v2h-1zM470,655h1v3h-1zM471,657h1v2h-1zM472,656h1v2h-1zM473,657h1v2h-1zM474,657h1v3h-1zM475,658h1v2h-1zM476,659h1v2h-1zM477,658h1v2h-1zM478,658h1v3h-1zM479,659h1v2h-1zM480,660h1v2h-1zM481,660h1v2h-1zM482,661h1v2h-1zM483,661h1v2h-1zM484,661h1v2h-1zM485,662h1v2h-1zM486,662h1v3h-1zM487,662h1v3h-1zM488,663h1v2h-1zM489,663h1v3h-1zM490,663h1v2h-1zM491,664h1v2h-1zM492,665h1v2h-1zM493,665h1v2h-1zM494,665h1v2h-1zM495,666h1v3h-1zM496,665h1v3h-1zM497,666h1v2h-1zM498,666h1v2h-1zM499,667h1v2h-1zM500,667h1v2h-1zM501,666h1v3h-1zM502,668h1v2h-1zM503,668h1v2h-1zM504,667h1v4h-1zM505,669h1v2h-1zM506,669h1v2h-1zM507,669h1v2h-1zM508,670h1v2h-1zM509,670h1v2h-1zM510,671h1v3h-1zM511,671h1v2h-1zM512,672h1v2h-1zM513,671h1v2h-1zM514,672h1v2h-1zM515,672h1v2h-1zM516,672h1v2h-1zM517,673h1v2h-1zM518,674h1v2h-1zM519,674h1v2h-1zM520,674h1v2h-1zM521,674h1v2h-1zM522,675h1v3h-1zM523,674h1v2h-1zM524,673h1v4h-1zM525,675h1v3h-1zM526,676h1v2h-1zM527,675h1v3h-1zM528,676h1v2h-1zM529,676h1v2h-1zM530,677h1v2h-1zM531,677h1v2h-1zM532,677h1v2h-1zM533,678h1v2h-1zM534,678h1v2h-1zM535,678h1v3h-1zM536,677h1v4h-1zM537,679h1v2h-1zM538,679h1v2h-1zM539,679h1v3h-1zM540,681h1v2h-1zM541,681h1v2h-1zM542,681h1v2h-1zM543,681h1v2h-1zM544,681h1v2h-1zM545,682h1v2h-1zM546,682h1v2h-1zM547,682h1v2h-1zM548,682h1v3h-1zM549,684h1v2h-1zM550,684h1v3h-1zM551,683h1v4h-1zM552,683h1v2h-1zM553,684h1v2h-1zM554,685h1v2h-1zM555,685h1v2h-1zM556,685h1v2h-1zM557,686h1v2h-1zM558,686h1v2h-1zM559,686h1v2h-1zM560,687h1v2h-1zM561,686h1v4h-1zM562,687h1v2h-1zM563,688h1v2h-1zM564,687h1v4h-1zM565,688h1v4h-1zM566,687h1v4h-1zM567,688h1v3h-1zM568,689h1v2h-1zM569,689h1v3h-1zM570,689h1v5h-1zM571,690h1v2h-1zM572,691h1v3h-1zM573,691h1v2h-1zM574,691h1v2h-1zM575,692h1v2h-1zM576,691h1v2h-1zM577,691h1v2h-1zM578,692h1v2h-1zM579,693h1v2h-1zM580,692h1v2h-1zM581,693h1v2h-1zM582,693h1v2h-1zM583,693h1v2h-1zM584,693h1v3h-1zM585,694h1v2h-1zM586,694h1v3h-1zM587,695h1v2h-1zM588,694h1v2h-1zM589,695h1v2h-1zM590,695h1v3h-1zM591,696h1v2h-1zM592,695h1v2h-1zM593,696h1v2h-1zM594,695h1v3h-1zM595,697h1v2h-1zM596,697h1v2h-1zM597,697h1v2h-1zM598,696h1v2h-1zM599,697h1v3h-1zM600,698h1v4h-1zM601,698h1v2h-1zM602,698h1v3h-1zM603,699h1v2h-1zM604,699h1v2h-1zM605,700h1v2h-1zM606,699h1v2h-1zM607,699h1v2h-1zM608,700h1v2h-1zM609,699h1v2h-1zM610,700h1v3h-1zM611,699h1v3h-1zM612,701h1v2h-1zM613,700h1v3h-1zM614,701h1v2h-1zM615,702h1v2h-1zM616,702h1v2h-1zM617,702h1v2h-1zM618,702h1v2h-1zM619,703h1v2h-1zM620,703h1v2h-1zM621,703h1v2h-1zM622,704h1v2h-1zM623,703h1v4h-1zM624,704h1v2h-1zM625,704h1v2h-1zM626,705h1v2h-1zM627,705h1v3h-1zM628,705h1v4h-1zM629,705h1v2h-1zM630,705h1v5h-1zM631,705h1v3h-1zM632,706h1v2h-1zM633,706h1v2h-1zM634,707h1v2h-1zM635,707h1v2h-1zM636,707h1v3h-1zM637,708h1v2h-1zM638,708h1v2h-1zM639,708h1v3h-1zM640,709h1v2h-1zM641,709h1v2h-1zM642,709h1v2h-1zM643,708h1v5h-1zM644,709h1v2h-1zM645,710h1v2h-1zM646,710h1v2h-1zM647,711h1v2h-1zM648,710h1v4h-1zM649,711h1v2h-1zM650,711h1v2h-1zM651,711h1v2h-1zM652,712h1v2h-1zM653,712h1v3h-1zM654,713h1v2h-1zM655,712h1v2h-1zM656,713h1v2h-1zM657,712h1v3h-1zM658,713h1v2h-1zM659,713h1v2h-1zM660,713h1v3h-1zM661,715h1v2h-1zM662,714h1v4h-1zM663,714h1v2h-1zM664,714h1v3h-1zM665,714h1v2h-1zM666,715h1v2h-1zM667,715h1v4h-1zM668,716h1v2h-1z" fill="#80ff00"/>
<rect x="98" y="520" width="1" height="248" fill="#80ffff" />
<rect x="137" y="520" width="1" height="248" fill="#3399ff" />
<rect x="209" y="520" width="1" height="33" fill="#ff0000" />
<rect x="209" y="558" width="1" height="210" fill="#ff0000" />
<rect x="208" y="554" width="1" height="1" fill="#ff0000" />
<rect x="208" y="556" width="1" height="1" fill="#ff0000" />
<rect x="210" y="554" width="1" height="1" fill="#ff0000" />
<rect x="210" y="556" width="1" height="1" fill="#ff0000" />
<rect x="207" y="553" width="1" height="1" fill="#ff0000" />
<rect x="207" y="557" width="1" height="1" fill="#ff0000" />
<rect x="211" y="553" width="1" height="1" fill="#ff0000" />
<rect x="211" y="557" width="1" height="1" fill="#ff0000" />
<rect x="209" y="555" width="1" height="1" fill="#ff0000" />
<rect x="204" y="555" width="3" height="1" fill="#ff0000" />
<rect x="212" y="555" width="3" height="1" fill="#ff0000" /></svg>
</body></html>
